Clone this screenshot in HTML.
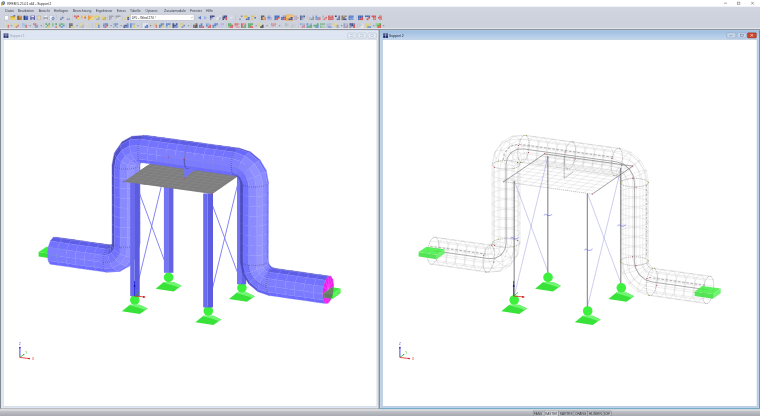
<!DOCTYPE html><html><head><meta charset="utf-8"><title>RFEM 5.21.01 x64 - Support 2</title><style>html,body{margin:0;padding:0;background:#fff}body{width:760px;height:416px;overflow:hidden;position:relative}svg{position:absolute;left:0;top:0;display:block}text{font-family:"Liberation Sans",sans-serif}</style></head><body>
<svg width="760" height="416" viewBox="0 0 760 416">
<defs><linearGradient id="gtb" x1="0" y1="0" x2="0" y2="1"><stop offset="0" stop-color="#d3d7e1"/><stop offset=".3" stop-color="#cfd3dd"/><stop offset="1" stop-color="#cdd1db"/></linearGradient><linearGradient id="gact" x1="0" y1="0" x2="0" y2="1"><stop offset="0" stop-color="#9dbde0"/><stop offset=".6" stop-color="#b4cce8"/><stop offset="1" stop-color="#c2d6ee"/></linearGradient><linearGradient id="gst" x1="0" y1="0" x2="0" y2="1"><stop offset="0" stop-color="#c4c6cc"/><stop offset="1" stop-color="#a6a8b0"/></linearGradient></defs>
<rect x="0" y="0" width="760" height="416" fill="#fff"/>
<rect x="0" y="6.7" width="760" height="21.5" fill="url(#gtb)"/>
<rect x="0" y="28.1" width="760" height="1.1" fill="#e2e5ea"/>
<rect x="0" y="29" width="760" height="1.4" fill="#8d9199"/>
<rect x="0" y="30.4" width="378.6" height="378" fill="#dde6f2"/>
<rect x="0" y="30.4" width="0.9" height="378.6" fill="#7a7d84"/>
<rect x="3.3" y="39.5" width="373.6" height="366.8" fill="#fff" stroke="#c4c8d0" stroke-width=".4"/>
<rect x="378.5" y="29.5" width="1.8" height="379.6" fill="#8c9097"/>
<rect x="380.2" y="30.4" width="379.8" height="378.2" fill="#bcd2ec"/>
<rect x="380.2" y="30.4" width="379.8" height="9.2" fill="url(#gact)"/>
<rect x="759.2" y="30.4" width="0.8" height="378" fill="#6f7f92"/>
<rect x="382.6" y="39.5" width="374.4" height="366.8" fill="#fff" stroke="#9fb4cc" stroke-width=".4"/>
<rect x="0" y="408.3" width="379" height="1.1" fill="#a2a4a8"/>
<rect x="380.2" y="408.2" width="379.8" height="1.2" fill="#5f9fb8"/>
<rect x="0" y="409.3" width="760" height="1.3" fill="#d6d7db"/>
<rect x="0" y="410.5" width="760" height="5.5" fill="url(#gst)"/>
<rect x="533.1" y="411" width="11.1" height="5" fill="#b8babf" stroke="#6c7078" stroke-width=".35"/>
<rect x="544.2" y="411" width="14.4" height="5" fill="#dcdde0" stroke="#6c7078" stroke-width=".35"/>
<rect x="558.6" y="411" width="15.4" height="5" fill="#babcc2" stroke="#6c7078" stroke-width=".35"/>
<rect x="574" y="411" width="13.8" height="5" fill="#b8babf" stroke="#6c7078" stroke-width=".35"/>
<rect x="587.8" y="411" width="15.3" height="5" fill="#b8babf" stroke="#6c7078" stroke-width=".35"/>
<rect x="603.1" y="411" width="8.3" height="5" fill="#b8babf" stroke="#6c7078" stroke-width=".35"/>
<rect x="130.5" y="14.6" width="63.5" height="5.6" fill="#fff" stroke="#aab2c2" stroke-width=".4"/>
<circle cx="3.4" cy="3.1" r="1.8" fill="#4a6ab8"/><circle cx="3.7" cy="2.9" r=".8" fill="#9cb0dc"/><rect x="1.1" y="2.3" width="1.7" height="3.3" rx=".7" fill="#c8a21e"/>
<path d="M724 3.2h3M737.4 2.2h2.4v2.2h-2.4zM751.2 1.8l2.6 2.8M753.8 1.8l-2.6 2.8" stroke="#444" stroke-width=".45" fill="none"/>
<rect x="286" y="14.8" width="7" height="5.8" fill="#f4c070" rx=".6" stroke="#d89030" stroke-width=".3"/>
<g opacity="0.76"><rect x="58.5" y="15.5" width="1.72" height="1.55" fill="#ced3dd"/><rect x="61.83" y="15.5" width="1.72" height="1.55" fill="#b4bccc"/><rect x="60.17" y="17" width="1.72" height="1.55" fill="#b4bccc"/><rect x="61.83" y="17" width="1.72" height="1.55" fill="#4c6cac"/><rect x="60.17" y="18.5" width="1.72" height="1.55" fill="#4c6cac"/></g>
<g opacity="0.66"><rect x="65" y="15.5" width="1.72" height="1.55" fill="#d6d9e3"/><rect x="65" y="17" width="1.72" height="1.55" fill="#d6d9e3"/><rect x="66.67" y="17" width="1.72" height="1.55" fill="#c0c6d4"/><rect x="65" y="18.5" width="1.72" height="1.55" fill="#d6d9e3"/><rect x="66.67" y="18.5" width="1.72" height="1.55" fill="#7888b0"/><rect x="68.33" y="18.5" width="1.72" height="1.55" fill="#7888b0"/></g>
<g opacity="0.76"><rect x="74" y="15.5" width="1.72" height="1.55" fill="#d43838"/><rect x="75.67" y="15.5" width="1.72" height="1.55" fill="#e37d7d"/><rect x="77.33" y="15.5" width="1.72" height="1.55" fill="#d43838"/><rect x="75.67" y="17" width="1.72" height="1.55" fill="#d43838"/><rect x="77.33" y="17" width="1.72" height="1.55" fill="#ecd444"/><rect x="77.33" y="18.5" width="1.72" height="1.55" fill="#ecd444"/></g>
<g opacity="0.85"><rect x="81" y="15.5" width="1.72" height="1.55" fill="#ecb444"/><rect x="84.33" y="15.5" width="1.72" height="1.55" fill="#ecb444"/><rect x="81" y="17" width="1.72" height="1.55" fill="#ecb444"/><rect x="82.67" y="17" width="1.72" height="1.55" fill="#f2ce85"/><rect x="84.33" y="17" width="1.72" height="1.55" fill="#dc5c30"/></g>
<g opacity="0.85"><rect x="88" y="15.5" width="1.72" height="1.55" fill="#e88c24"/><rect x="89.67" y="15.5" width="1.72" height="1.55" fill="#f0b470"/><rect x="91.33" y="15.5" width="1.72" height="1.55" fill="#f0b470"/><rect x="88" y="17" width="1.72" height="1.55" fill="#e88c24"/><rect x="89.67" y="17" width="1.72" height="1.55" fill="#e88c24"/><rect x="91.33" y="17" width="1.72" height="1.55" fill="#f4dc60"/><rect x="88" y="18.5" width="1.72" height="1.55" fill="#e88c24"/><rect x="89.67" y="18.5" width="1.72" height="1.55" fill="#f4dc60"/><rect x="91.33" y="18.5" width="1.72" height="1.55" fill="#f4dc60"/></g>
<g opacity="0.85"><rect x="94.5" y="15.5" width="1.72" height="1.55" fill="#e8d44c"/><rect x="96.17" y="15.5" width="1.72" height="1.55" fill="#e8d44c"/><rect x="97.83" y="15.5" width="1.72" height="1.55" fill="#e8d44c"/><rect x="94.5" y="17" width="1.72" height="1.55" fill="#e8d44c"/><rect x="96.17" y="17" width="1.72" height="1.55" fill="#f0e38a"/><rect x="97.83" y="17" width="1.72" height="1.55" fill="#a0a4ac"/><rect x="96.17" y="18.5" width="1.72" height="1.55" fill="#a0a4ac"/><rect x="97.83" y="18.5" width="1.72" height="1.55" fill="#a0a4ac"/></g>
<g opacity="0.85"><rect x="102.67" y="15.5" width="1.72" height="1.55" fill="#e8d454"/><rect x="101" y="17" width="1.72" height="1.55" fill="#e8d454"/><rect x="102.67" y="17" width="1.72" height="1.55" fill="#e8d454"/><rect x="104.33" y="17" width="1.72" height="1.55" fill="#c8a838"/><rect x="101" y="18.5" width="1.72" height="1.55" fill="#e8d454"/><rect x="102.67" y="18.5" width="1.72" height="1.55" fill="#c8a838"/><rect x="104.33" y="18.5" width="1.72" height="1.55" fill="#c8a838"/></g>
<g opacity="0.85"><rect x="109" y="15.5" width="1.55" height="1.55" fill="#9c9ea6"/><rect x="110.5" y="15.5" width="1.55" height="1.55" fill="#9c9ea6"/><rect x="112" y="15.5" width="1.55" height="1.55" fill="#9c9ea6"/><rect x="109" y="17" width="1.55" height="1.55" fill="#9c9ea6"/><rect x="110.5" y="17" width="1.55" height="1.55" fill="#9c9ea6"/><rect x="112" y="17" width="1.55" height="1.55" fill="#d4d6dc"/><rect x="109" y="18.5" width="1.55" height="1.55" fill="#9c9ea6"/><rect x="112" y="18.5" width="1.55" height="1.55" fill="#d4d6dc"/></g>
<g opacity="0.85"><rect x="115.5" y="15.5" width="1.72" height="1.55" fill="#94969e"/><rect x="117.17" y="15.5" width="1.72" height="1.55" fill="#94969e"/><rect x="118.83" y="15.5" width="1.72" height="1.55" fill="#94969e"/><rect x="115.5" y="17" width="1.72" height="1.55" fill="#b9babf"/><rect x="117.17" y="17" width="1.72" height="1.55" fill="#b9babf"/><rect x="118.83" y="17" width="1.72" height="1.55" fill="#e4e6ea"/><rect x="117.17" y="18.5" width="1.72" height="1.55" fill="#e4e6ea"/></g>
<g opacity="0.76"><rect x="127.33" y="15.5" width="1.72" height="1.55" fill="#e4cc44"/><rect x="125.67" y="17" width="1.72" height="1.55" fill="#eddd85"/><rect x="127.33" y="17" width="1.72" height="1.55" fill="#2c3c8c"/><rect x="124" y="18.5" width="1.72" height="1.55" fill="#e4cc44"/><rect x="127.33" y="18.5" width="1.72" height="1.55" fill="#2c3c8c"/></g>
<g opacity="0.76"><path d="M201 16.1l-3 1.7l3 1.7z" fill="#3060d0"/></g>
<g opacity="0.66"><path d="M204 16.1l3 1.7l-3 1.7z" fill="#80a0e0"/></g>
<g opacity="0.85"><rect x="210" y="15.5" width="1.55" height="1.55" fill="#283880"/><rect x="211.5" y="15.5" width="1.55" height="1.55" fill="#283880"/><rect x="213" y="15.5" width="1.55" height="1.55" fill="#283880"/><rect x="210" y="17" width="1.55" height="1.55" fill="#283880"/><rect x="211.5" y="17" width="1.55" height="1.55" fill="#737dac"/><rect x="213" y="17" width="1.55" height="1.55" fill="#d0d4e0"/><rect x="210" y="18.5" width="1.55" height="1.55" fill="#737dac"/><rect x="211.5" y="18.5" width="1.55" height="1.55" fill="#d0d4e0"/><rect x="213" y="18.5" width="1.55" height="1.55" fill="#d0d4e0"/></g>
<g opacity="0.76"><rect x="219.17" y="15.5" width="1.38" height="1.55" fill="#f0f0f5"/><rect x="216.5" y="17" width="1.38" height="1.55" fill="#f0f0f5"/><rect x="217.83" y="17" width="1.38" height="1.55" fill="#e8e8f0"/><rect x="219.17" y="17" width="1.38" height="1.55" fill="#a0a8b8"/><rect x="216.5" y="18.5" width="1.38" height="1.55" fill="#f0f0f5"/><rect x="219.17" y="18.5" width="1.38" height="1.55" fill="#a0a8b8"/></g>
<g opacity="0.85"><rect x="222.5" y="15.5" width="1.55" height="1.55" fill="#737dac"/><rect x="224" y="15.5" width="1.55" height="1.55" fill="#283880"/><rect x="225.5" y="15.5" width="1.55" height="1.55" fill="#283880"/><rect x="222.5" y="17" width="1.55" height="1.55" fill="#283880"/><rect x="224" y="17" width="1.55" height="1.55" fill="#283880"/><rect x="225.5" y="17" width="1.55" height="1.55" fill="#d04040"/><rect x="222.5" y="18.5" width="1.55" height="1.55" fill="#283880"/><rect x="225.5" y="18.5" width="1.55" height="1.55" fill="#d04040"/></g>
<g opacity="0.76"><rect x="229.5" y="15.5" width="1.55" height="1.55" fill="#d8dce8"/><rect x="231" y="15.5" width="1.55" height="1.55" fill="#d8dce8"/><rect x="232.5" y="15.5" width="1.55" height="1.55" fill="#d8dce8"/><rect x="229.5" y="17" width="1.55" height="1.55" fill="#e5e8f0"/><rect x="231" y="17" width="1.55" height="1.55" fill="#e5e8f0"/><rect x="229.5" y="18.5" width="1.55" height="1.55" fill="#d8dce8"/></g>
<g opacity="0.85"><rect x="240.83" y="15.5" width="1.72" height="1.55" fill="#7882b6"/><rect x="239.17" y="18.5" width="1.72" height="1.55" fill="#8090c0"/></g>
<g opacity="0.85"><rect x="244" y="15.5" width="1.88" height="1.55" fill="#e0c040"/><rect x="245.83" y="15.5" width="1.88" height="1.55" fill="#e0c040"/><rect x="244" y="17" width="1.88" height="1.55" fill="#ead682"/><rect x="245.83" y="17" width="1.88" height="1.55" fill="#ead682"/><rect x="247.67" y="17" width="1.88" height="1.55" fill="#4060b0"/><rect x="245.83" y="18.5" width="1.88" height="1.55" fill="#4060b0"/><rect x="247.67" y="18.5" width="1.88" height="1.55" fill="#4060b0"/></g>
<g opacity="0.85"><rect x="251" y="15.5" width="1.72" height="1.55" fill="#e0c040"/><rect x="252.67" y="15.5" width="1.72" height="1.55" fill="#e0c040"/><rect x="252.67" y="17" width="1.72" height="1.55" fill="#ead682"/><rect x="254.33" y="17" width="1.72" height="1.55" fill="#4060b0"/><rect x="251" y="18.5" width="1.72" height="1.55" fill="#e0c040"/></g>
<g opacity="0.85"><rect x="261" y="15.5" width="1.72" height="1.55" fill="#504840"/><rect x="262.67" y="15.5" width="1.72" height="1.55" fill="#504840"/><rect x="261" y="17" width="1.72" height="1.55" fill="#504840"/><rect x="264.33" y="17" width="1.72" height="1.55" fill="#e08030"/><rect x="261" y="18.5" width="1.72" height="1.55" fill="#504840"/><rect x="262.67" y="18.5" width="1.72" height="1.55" fill="#e08030"/><rect x="264.33" y="18.5" width="1.72" height="1.55" fill="#e08030"/></g>
<g opacity="0.76"><rect x="267.5" y="15.5" width="1.55" height="1.55" fill="#8da2e0"/><rect x="269" y="15.5" width="1.55" height="1.55" fill="#8da2e0"/><rect x="267.5" y="17" width="1.55" height="1.55" fill="#5070d0"/><rect x="269" y="17" width="1.55" height="1.55" fill="#5070d0"/><rect x="270.5" y="17" width="1.55" height="1.55" fill="#a0b0e0"/><rect x="267.5" y="18.5" width="1.55" height="1.55" fill="#8da2e0"/><rect x="269" y="18.5" width="1.55" height="1.55" fill="#a0b0e0"/><rect x="270.5" y="18.5" width="1.55" height="1.55" fill="#a0b0e0"/></g>
<g opacity="0.85"><rect x="274.5" y="15.5" width="1.72" height="1.55" fill="#3060c0"/><rect x="276.17" y="15.5" width="1.72" height="1.55" fill="#3060c0"/><rect x="277.83" y="15.5" width="1.72" height="1.55" fill="#3060c0"/><rect x="274.5" y="17" width="1.72" height="1.55" fill="#3060c0"/><rect x="276.17" y="17" width="1.72" height="1.55" fill="#3060c0"/><rect x="277.83" y="17" width="1.72" height="1.55" fill="#d04040"/><rect x="274.5" y="18.5" width="1.72" height="1.55" fill="#3060c0"/><rect x="276.17" y="18.5" width="1.72" height="1.55" fill="#d04040"/></g>
<g opacity="0.85"><rect x="282.67" y="15.5" width="1.72" height="1.55" fill="#7897d6"/><rect x="284.33" y="15.5" width="1.72" height="1.55" fill="#7897d6"/><rect x="281" y="17" width="1.72" height="1.55" fill="#3060c0"/><rect x="282.67" y="17" width="1.72" height="1.55" fill="#3060c0"/><rect x="284.33" y="17" width="1.72" height="1.55" fill="#d04040"/><rect x="281" y="18.5" width="1.72" height="1.55" fill="#3060c0"/><rect x="282.67" y="18.5" width="1.72" height="1.55" fill="#d04040"/><rect x="284.33" y="18.5" width="1.72" height="1.55" fill="#d04040"/></g>
<g opacity="0.95"><rect x="286.5" y="15.5" width="2.05" height="1.55" fill="#f5c178"/><rect x="288.5" y="15.5" width="2.05" height="1.55" fill="#f5c178"/><rect x="290.5" y="15.5" width="2.05" height="1.55" fill="#f5c178"/><rect x="290.5" y="17" width="2.05" height="1.55" fill="#3050c0"/><rect x="286.5" y="18.5" width="2.05" height="1.55" fill="#f0a030"/><rect x="288.5" y="18.5" width="2.05" height="1.55" fill="#3050c0"/><rect x="290.5" y="18.5" width="2.05" height="1.55" fill="#3050c0"/></g>
<g opacity="0.76"><rect x="294" y="15.5" width="1.55" height="1.55" fill="#b0a8b8"/><rect x="295.5" y="15.5" width="1.55" height="1.55" fill="#b0a8b8"/><rect x="294" y="17" width="1.55" height="1.55" fill="#b0a8b8"/><rect x="295.5" y="17" width="1.55" height="1.55" fill="#b0a8b8"/><rect x="297" y="17" width="1.55" height="1.55" fill="#d090a0"/><rect x="294" y="18.5" width="1.55" height="1.55" fill="#b0a8b8"/><rect x="295.5" y="18.5" width="1.55" height="1.55" fill="#d090a0"/></g>
<g opacity="0.76"><rect x="300" y="15.5" width="1.72" height="1.55" fill="#304080"/><rect x="301.67" y="15.5" width="1.72" height="1.55" fill="#7882ac"/><rect x="303.33" y="15.5" width="1.72" height="1.55" fill="#304080"/><rect x="300" y="17" width="1.72" height="1.55" fill="#304080"/><rect x="301.67" y="17" width="1.72" height="1.55" fill="#7882ac"/><rect x="303.33" y="17" width="1.72" height="1.55" fill="#a0a8c0"/><rect x="300" y="18.5" width="1.72" height="1.55" fill="#304080"/><rect x="301.67" y="18.5" width="1.72" height="1.55" fill="#a0a8c0"/></g>
<g opacity="0.57"><rect x="312.33" y="15.5" width="1.72" height="1.55" fill="#a0a4b0"/><rect x="309" y="17" width="1.72" height="1.55" fill="#a0a4b0"/><rect x="312.33" y="17" width="1.72" height="1.55" fill="#606878"/><rect x="309" y="18.5" width="1.72" height="1.55" fill="#a0a4b0"/><rect x="310.67" y="18.5" width="1.72" height="1.55" fill="#606878"/><rect x="312.33" y="18.5" width="1.72" height="1.55" fill="#606878"/></g>
<g opacity="0.66"><rect x="315.5" y="15.5" width="1.72" height="1.55" fill="#4080d0"/><rect x="315.5" y="17" width="1.72" height="1.55" fill="#4080d0"/><rect x="317.17" y="17" width="1.72" height="1.55" fill="#4080d0"/><rect x="318.83" y="17" width="1.72" height="1.55" fill="#d05050"/><rect x="315.5" y="18.5" width="1.72" height="1.55" fill="#4080d0"/><rect x="317.17" y="18.5" width="1.72" height="1.55" fill="#d05050"/><rect x="318.83" y="18.5" width="1.72" height="1.55" fill="#d05050"/></g>
<g opacity="0.66"><rect x="322" y="15.5" width="1.72" height="1.55" fill="#a0a0a8"/><rect x="325.33" y="15.5" width="1.72" height="1.55" fill="#c1c1c6"/><rect x="322" y="17" width="1.72" height="1.55" fill="#c1c1c6"/><rect x="323.67" y="17" width="1.72" height="1.55" fill="#c1c1c6"/><rect x="325.33" y="17" width="1.72" height="1.55" fill="#d04040"/><rect x="322" y="18.5" width="1.72" height="1.55" fill="#c1c1c6"/><rect x="323.67" y="18.5" width="1.72" height="1.55" fill="#d04040"/></g>
<g opacity="0.66"><rect x="328" y="15.5" width="1.88" height="1.55" fill="#d83030"/><rect x="329.83" y="15.5" width="1.88" height="1.55" fill="#e57878"/><rect x="331.67" y="15.5" width="1.88" height="1.55" fill="#d83030"/><rect x="328" y="17" width="1.88" height="1.55" fill="#d83030"/><rect x="329.83" y="17" width="1.88" height="1.55" fill="#d83030"/><rect x="331.67" y="17" width="1.88" height="1.55" fill="#d83030"/><rect x="328" y="18.5" width="1.88" height="1.55" fill="#d83030"/><rect x="329.83" y="18.5" width="1.88" height="1.55" fill="#d83030"/><rect x="331.67" y="18.5" width="1.88" height="1.55" fill="#d83030"/></g>
<g opacity="0.85"><rect x="335" y="15.5" width="1.72" height="1.55" fill="#202870"/><rect x="338.33" y="15.5" width="1.72" height="1.55" fill="#6e73a2"/><rect x="338.33" y="17" width="1.72" height="1.55" fill="#5060a0"/><rect x="336.67" y="18.5" width="1.72" height="1.55" fill="#5060a0"/><rect x="338.33" y="18.5" width="1.72" height="1.55" fill="#5060a0"/></g>
<g opacity="0.85"><rect x="341.5" y="15.5" width="1.72" height="1.55" fill="#806850"/><rect x="343.17" y="15.5" width="1.72" height="1.55" fill="#ac9c8d"/><rect x="344.83" y="15.5" width="1.72" height="1.55" fill="#806850"/><rect x="341.5" y="17" width="1.72" height="1.55" fill="#806850"/><rect x="343.17" y="17" width="1.72" height="1.55" fill="#806850"/><rect x="341.5" y="18.5" width="1.72" height="1.55" fill="#806850"/><rect x="343.17" y="18.5" width="1.72" height="1.55" fill="#283880"/><rect x="344.83" y="18.5" width="1.72" height="1.55" fill="#283880"/></g>
<g opacity="0.76"><rect x="348.5" y="15.5" width="1.72" height="1.55" fill="#3868c8"/><rect x="350.17" y="15.5" width="1.72" height="1.55" fill="#3868c8"/><rect x="351.83" y="15.5" width="1.72" height="1.55" fill="#3868c8"/><rect x="348.5" y="17" width="1.72" height="1.55" fill="#3868c8"/><rect x="350.17" y="17" width="1.72" height="1.55" fill="#3868c8"/><rect x="351.83" y="17" width="1.72" height="1.55" fill="#5888d8"/><rect x="348.5" y="18.5" width="1.72" height="1.55" fill="#3868c8"/><rect x="350.17" y="18.5" width="1.72" height="1.55" fill="#5888d8"/><rect x="351.83" y="18.5" width="1.72" height="1.55" fill="#5888d8"/></g>
<g opacity="0.85"><rect x="358" y="15.5" width="1.72" height="1.55" fill="#2858b8"/><rect x="359.67" y="15.5" width="1.72" height="1.55" fill="#2858b8"/><rect x="361.33" y="15.5" width="1.72" height="1.55" fill="#2858b8"/><rect x="358" y="17" width="1.72" height="1.55" fill="#2858b8"/><rect x="359.67" y="17" width="1.72" height="1.55" fill="#2858b8"/><rect x="361.33" y="17" width="1.72" height="1.55" fill="#d03030"/><rect x="358" y="18.5" width="1.72" height="1.55" fill="#2858b8"/><rect x="359.67" y="18.5" width="1.72" height="1.55" fill="#d03030"/><rect x="361.33" y="18.5" width="1.72" height="1.55" fill="#d03030"/></g>
<g opacity="0.85"><rect x="365" y="15.5" width="1.72" height="1.55" fill="#2858b8"/><rect x="366.67" y="15.5" width="1.72" height="1.55" fill="#2858b8"/><rect x="368.33" y="15.5" width="1.72" height="1.55" fill="#2858b8"/><rect x="368.33" y="17" width="1.72" height="1.55" fill="#d03030"/><rect x="366.67" y="18.5" width="1.72" height="1.55" fill="#d03030"/></g>
<g opacity="0.76"><rect x="371.5" y="15.5" width="1.55" height="1.55" fill="#d83030"/><rect x="373" y="15.5" width="1.55" height="1.55" fill="#d83030"/><rect x="374.5" y="15.5" width="1.55" height="1.55" fill="#d83030"/><rect x="373" y="17" width="1.55" height="1.55" fill="#d83030"/><rect x="374.5" y="17" width="1.55" height="1.55" fill="#e06060"/><rect x="373" y="18.5" width="1.55" height="1.55" fill="#e06060"/><rect x="374.5" y="18.5" width="1.55" height="1.55" fill="#e06060"/></g>
<g opacity="0.76"><rect x="379.33" y="15.5" width="1.38" height="1.55" fill="#d83030"/><rect x="380.67" y="15.5" width="1.38" height="1.55" fill="#e57878"/><rect x="378" y="17" width="1.38" height="1.55" fill="#d83030"/><rect x="379.33" y="17" width="1.38" height="1.55" fill="#d83030"/><rect x="380.67" y="17" width="1.38" height="1.55" fill="#e06060"/><rect x="379.33" y="18.5" width="1.38" height="1.55" fill="#e06060"/><rect x="380.67" y="18.5" width="1.38" height="1.55" fill="#e06060"/></g>
<g opacity="0.57"><rect x="5" y="23.3" width="1.38" height="1.55" fill="#f5e588"/><rect x="7.67" y="23.3" width="1.38" height="1.55" fill="#f5e588"/><rect x="5" y="24.8" width="1.38" height="1.55" fill="#f0d848"/><rect x="7.67" y="24.8" width="1.38" height="1.55" fill="#d03030"/><rect x="5" y="26.3" width="1.38" height="1.55" fill="#f5e588"/><rect x="7.67" y="26.3" width="1.38" height="1.55" fill="#d03030"/></g>
<g opacity="0.52"><rect x="14" y="23.3" width="1.72" height="1.55" fill="#f0d848"/><rect x="15.67" y="23.3" width="1.72" height="1.55" fill="#f0d848"/><rect x="14" y="24.8" width="1.72" height="1.55" fill="#f0d848"/><rect x="15.67" y="24.8" width="1.72" height="1.55" fill="#f0d848"/><rect x="17.33" y="24.8" width="1.72" height="1.55" fill="#d03030"/><rect x="15.67" y="26.3" width="1.72" height="1.55" fill="#d03030"/></g>
<g opacity="0.52"><rect x="22" y="23.3" width="1.72" height="1.55" fill="#58a4e0"/><rect x="23.67" y="23.3" width="1.72" height="1.55" fill="#92c3ea"/><rect x="22" y="24.8" width="1.72" height="1.55" fill="#92c3ea"/><rect x="23.67" y="24.8" width="1.72" height="1.55" fill="#58a4e0"/><rect x="25.33" y="24.8" width="1.72" height="1.55" fill="#d03030"/><rect x="22" y="26.3" width="1.72" height="1.55" fill="#92c3ea"/><rect x="25.33" y="26.3" width="1.72" height="1.55" fill="#d03030"/></g>
<g opacity="0.57"><rect x="33" y="23.3" width="1.72" height="1.55" fill="#d03838"/><rect x="34.67" y="23.3" width="1.72" height="1.55" fill="#d03838"/><rect x="34.67" y="24.8" width="1.72" height="1.55" fill="#d03838"/><rect x="36.33" y="24.8" width="1.72" height="1.55" fill="#5878d0"/><rect x="34.67" y="26.3" width="1.72" height="1.55" fill="#5878d0"/><rect x="36.33" y="26.3" width="1.72" height="1.55" fill="#5878d0"/></g>
<g opacity="0.76"><rect x="45.5" y="23.3" width="1.55" height="1.55" fill="#2c9c3c"/><rect x="48.5" y="23.3" width="1.55" height="1.55" fill="#2c9c3c"/><rect x="47" y="24.8" width="1.55" height="1.55" fill="#2c9c3c"/><rect x="48.5" y="24.8" width="1.55" height="1.55" fill="#e4c840"/><rect x="45.5" y="26.3" width="1.55" height="1.55" fill="#75be80"/><rect x="47" y="26.3" width="1.55" height="1.55" fill="#e4c840"/><rect x="48.5" y="26.3" width="1.55" height="1.55" fill="#e4c840"/></g>
<g opacity="0.76"><rect x="52" y="23.3" width="1.72" height="1.55" fill="#75be80"/><rect x="55.33" y="23.3" width="1.72" height="1.55" fill="#2c9c3c"/><rect x="52" y="24.8" width="1.72" height="1.55" fill="#75be80"/><rect x="55.33" y="26.3" width="1.72" height="1.55" fill="#d06030"/></g>
<g opacity="0.76"><rect x="59" y="23.3" width="1.88" height="1.55" fill="#80c192"/><rect x="60.83" y="23.3" width="1.88" height="1.55" fill="#3ca058"/><rect x="62.67" y="23.3" width="1.88" height="1.55" fill="#80c192"/><rect x="59" y="24.8" width="1.88" height="1.55" fill="#3ca058"/><rect x="62.67" y="24.8" width="1.88" height="1.55" fill="#3c80d0"/><rect x="60.83" y="26.3" width="1.88" height="1.55" fill="#3c80d0"/></g>
<g opacity="0.57"><rect x="69" y="23.3" width="1.88" height="1.55" fill="#282828"/><rect x="70.83" y="23.3" width="1.88" height="1.55" fill="#282828"/><rect x="69" y="24.8" width="1.88" height="1.55" fill="#282828"/><rect x="70.83" y="24.8" width="1.88" height="1.55" fill="#282828"/><rect x="69" y="26.3" width="1.88" height="1.55" fill="#282828"/><rect x="70.83" y="26.3" width="1.88" height="1.55" fill="#e4c840"/><rect x="72.67" y="26.3" width="1.88" height="1.55" fill="#e4c840"/></g>
<g opacity="0.57"><rect x="79" y="23.3" width="1.72" height="1.55" fill="#e4d464"/><rect x="80.67" y="23.3" width="1.72" height="1.55" fill="#ede39a"/><rect x="82.33" y="23.3" width="1.72" height="1.55" fill="#e4d464"/><rect x="79" y="24.8" width="1.72" height="1.55" fill="#e4d464"/><rect x="80.67" y="24.8" width="1.72" height="1.55" fill="#e4d464"/><rect x="82.33" y="24.8" width="1.72" height="1.55" fill="#9ca4b4"/><rect x="79" y="26.3" width="1.72" height="1.55" fill="#e4d464"/><rect x="80.67" y="26.3" width="1.72" height="1.55" fill="#9ca4b4"/><rect x="82.33" y="26.3" width="1.72" height="1.55" fill="#9ca4b4"/></g>
<g opacity="0.57"><rect x="85" y="23.3" width="1.55" height="1.55" fill="#dbdde0"/><rect x="86.5" y="23.3" width="1.55" height="1.55" fill="#dbdde0"/><rect x="88" y="24.8" width="1.55" height="1.55" fill="#e4d464"/><rect x="85" y="26.3" width="1.55" height="1.55" fill="#dbdde0"/></g>
<g opacity="0.66"><rect x="95" y="23.3" width="1.55" height="1.55" fill="#e4c840"/><rect x="96.5" y="23.3" width="1.55" height="1.55" fill="#e4c840"/><rect x="98" y="23.3" width="1.55" height="1.55" fill="#e4c840"/><rect x="95" y="24.8" width="1.55" height="1.55" fill="#eddb82"/><rect x="96.5" y="24.8" width="1.55" height="1.55" fill="#eddb82"/><rect x="98" y="24.8" width="1.55" height="1.55" fill="#3c6cc4"/><rect x="95" y="26.3" width="1.55" height="1.55" fill="#e4c840"/><rect x="98" y="26.3" width="1.55" height="1.55" fill="#3c6cc4"/></g>
<g opacity="0.76"><rect x="103" y="23.3" width="1.72" height="1.55" fill="#809fd8"/><rect x="104.67" y="23.3" width="1.72" height="1.55" fill="#3c6cc4"/><rect x="106.33" y="23.3" width="1.72" height="1.55" fill="#3c6cc4"/><rect x="103" y="24.8" width="1.72" height="1.55" fill="#3c6cc4"/><rect x="104.67" y="24.8" width="1.72" height="1.55" fill="#809fd8"/><rect x="106.33" y="24.8" width="1.72" height="1.55" fill="#d03838"/><rect x="103" y="26.3" width="1.72" height="1.55" fill="#809fd8"/><rect x="104.67" y="26.3" width="1.72" height="1.55" fill="#d03838"/></g>
<g opacity="0.66"><rect x="113" y="23.3" width="1.72" height="1.55" fill="#85a4d8"/><rect x="114.67" y="23.3" width="1.72" height="1.55" fill="#4474c4"/><rect x="116.33" y="23.3" width="1.72" height="1.55" fill="#4474c4"/><rect x="114.67" y="24.8" width="1.72" height="1.55" fill="#4474c4"/><rect x="113" y="26.3" width="1.72" height="1.55" fill="#85a4d8"/><rect x="116.33" y="26.3" width="1.72" height="1.55" fill="#80a0d8"/></g>
<g opacity="0.85"><rect x="126.83" y="23.3" width="1.72" height="1.55" fill="#707ba7"/><rect x="123.5" y="24.8" width="1.72" height="1.55" fill="#707ba7"/><rect x="125.17" y="24.8" width="1.72" height="1.55" fill="#243478"/><rect x="126.83" y="24.8" width="1.72" height="1.55" fill="#5c7cc4"/><rect x="123.5" y="26.3" width="1.72" height="1.55" fill="#243478"/><rect x="125.17" y="26.3" width="1.72" height="1.55" fill="#5c7cc4"/><rect x="126.83" y="26.3" width="1.72" height="1.55" fill="#5c7cc4"/></g>
<g opacity="0.76"><rect x="130" y="23.3" width="1.72" height="1.55" fill="#4474c4"/><rect x="131.67" y="23.3" width="1.72" height="1.55" fill="#85a4d8"/><rect x="133.33" y="23.3" width="1.72" height="1.55" fill="#85a4d8"/><rect x="130" y="24.8" width="1.72" height="1.55" fill="#4474c4"/><rect x="133.33" y="24.8" width="1.72" height="1.55" fill="#e4c840"/><rect x="130" y="26.3" width="1.72" height="1.55" fill="#4474c4"/><rect x="133.33" y="26.3" width="1.72" height="1.55" fill="#e4c840"/></g>
<g opacity="0.76"><rect x="143" y="23.3" width="1.72" height="1.55" fill="#f4f4fa"/><rect x="144.67" y="23.3" width="1.72" height="1.55" fill="#f4f4fa"/><rect x="146.33" y="23.3" width="1.72" height="1.55" fill="#f4f4fa"/><rect x="143" y="24.8" width="1.72" height="1.55" fill="#f4f4fa"/><rect x="146.33" y="24.8" width="1.72" height="1.55" fill="#2c5cc0"/><rect x="143" y="26.3" width="1.72" height="1.55" fill="#f4f4fa"/><rect x="144.67" y="26.3" width="1.72" height="1.55" fill="#2c5cc0"/><rect x="146.33" y="26.3" width="1.72" height="1.55" fill="#2c5cc0"/></g>
<g opacity="0.57"><rect x="153" y="23.3" width="1.38" height="1.55" fill="#e4c840"/><rect x="154.33" y="23.3" width="1.38" height="1.55" fill="#e4c840"/><rect x="155.67" y="23.3" width="1.38" height="1.55" fill="#e4c840"/><rect x="153" y="24.8" width="1.38" height="1.55" fill="#e4c840"/><rect x="154.33" y="24.8" width="1.38" height="1.55" fill="#e4c840"/><rect x="155.67" y="24.8" width="1.38" height="1.55" fill="#d03838"/><rect x="155.67" y="26.3" width="1.38" height="1.55" fill="#d03838"/></g>
<g opacity="0.76"><rect x="160.67" y="23.3" width="1.72" height="1.55" fill="#3c6cc4"/><rect x="162.33" y="23.3" width="1.72" height="1.55" fill="#3c6cc4"/><rect x="159" y="24.8" width="1.72" height="1.55" fill="#3c6cc4"/><rect x="160.67" y="24.8" width="1.72" height="1.55" fill="#3c6cc4"/><rect x="162.33" y="24.8" width="1.72" height="1.55" fill="#e4c840"/><rect x="159" y="26.3" width="1.72" height="1.55" fill="#3c6cc4"/><rect x="162.33" y="26.3" width="1.72" height="1.55" fill="#e4c840"/></g>
<g opacity="0.76"><rect x="166" y="23.3" width="1.55" height="1.55" fill="#3c6cc4"/><rect x="167.5" y="23.3" width="1.55" height="1.55" fill="#3c6cc4"/><rect x="169" y="23.3" width="1.55" height="1.55" fill="#3c6cc4"/><rect x="166" y="24.8" width="1.55" height="1.55" fill="#3c6cc4"/><rect x="169" y="24.8" width="1.55" height="1.55" fill="#e4c840"/><rect x="166" y="26.3" width="1.55" height="1.55" fill="#809fd8"/><rect x="169" y="26.3" width="1.55" height="1.55" fill="#e4c840"/></g>
<g opacity="0.85"><rect x="172.5" y="23.3" width="1.72" height="1.55" fill="#243478"/><rect x="175.83" y="23.3" width="1.72" height="1.55" fill="#243478"/><rect x="172.5" y="24.8" width="1.72" height="1.55" fill="#243478"/><rect x="174.17" y="24.8" width="1.72" height="1.55" fill="#243478"/><rect x="175.83" y="24.8" width="1.72" height="1.55" fill="#5c7cc4"/><rect x="172.5" y="26.3" width="1.72" height="1.55" fill="#243478"/><rect x="174.17" y="26.3" width="1.72" height="1.55" fill="#5c7cc4"/><rect x="175.83" y="26.3" width="1.72" height="1.55" fill="#5c7cc4"/></g>
<g opacity="0.66"><rect x="180" y="23.3" width="1.72" height="1.55" fill="#e4c840"/><rect x="181.67" y="23.3" width="1.72" height="1.55" fill="#e4c840"/><rect x="181.67" y="24.8" width="1.72" height="1.55" fill="#eddb82"/><rect x="183.33" y="24.8" width="1.72" height="1.55" fill="#3c6cc4"/><rect x="180" y="26.3" width="1.72" height="1.55" fill="#eddb82"/><rect x="181.67" y="26.3" width="1.72" height="1.55" fill="#3c6cc4"/></g>
<g opacity="0.76"><rect x="194.5" y="23.3" width="1.55" height="1.55" fill="#9f8d82"/><rect x="196" y="23.3" width="1.55" height="1.55" fill="#6c5040"/><rect x="193" y="24.8" width="1.55" height="1.55" fill="#6c5040"/><rect x="194.5" y="24.8" width="1.55" height="1.55" fill="#6c5040"/><rect x="196" y="24.8" width="1.55" height="1.55" fill="#282828"/><rect x="193" y="26.3" width="1.55" height="1.55" fill="#6c5040"/><rect x="194.5" y="26.3" width="1.55" height="1.55" fill="#282828"/><rect x="196" y="26.3" width="1.55" height="1.55" fill="#282828"/></g>
<g opacity="0.76"><rect x="200.67" y="23.3" width="1.72" height="1.55" fill="#3c6cc4"/><rect x="199" y="24.8" width="1.72" height="1.55" fill="#3c6cc4"/><rect x="200.67" y="24.8" width="1.72" height="1.55" fill="#3c6cc4"/><rect x="199" y="26.3" width="1.72" height="1.55" fill="#3c6cc4"/><rect x="200.67" y="26.3" width="1.72" height="1.55" fill="#d03838"/><rect x="202.33" y="26.3" width="1.72" height="1.55" fill="#d03838"/></g>
<g opacity="0.76"><rect x="206" y="23.3" width="1.72" height="1.55" fill="#809fd8"/><rect x="207.67" y="23.3" width="1.72" height="1.55" fill="#809fd8"/><rect x="206" y="24.8" width="1.72" height="1.55" fill="#3c6cc4"/><rect x="209.33" y="24.8" width="1.72" height="1.55" fill="#d03838"/><rect x="207.67" y="26.3" width="1.72" height="1.55" fill="#d03838"/><rect x="209.33" y="26.3" width="1.72" height="1.55" fill="#d03838"/></g>
<g opacity="0.76"><rect x="214.33" y="23.3" width="1.88" height="1.55" fill="#3c6cc4"/><rect x="216.17" y="23.3" width="1.88" height="1.55" fill="#3c6cc4"/><rect x="212.5" y="24.8" width="1.88" height="1.55" fill="#3c6cc4"/><rect x="214.33" y="24.8" width="1.88" height="1.55" fill="#3c6cc4"/><rect x="216.17" y="24.8" width="1.88" height="1.55" fill="#a0b8e0"/><rect x="212.5" y="26.3" width="1.88" height="1.55" fill="#3c6cc4"/><rect x="214.33" y="26.3" width="1.88" height="1.55" fill="#a0b8e0"/></g>
<g opacity="0.76"><rect x="220.67" y="23.3" width="1.72" height="1.55" fill="#a4a4dc"/><rect x="222.33" y="23.3" width="1.72" height="1.55" fill="#a4a4dc"/><rect x="219" y="24.8" width="1.72" height="1.55" fill="#c3c3e8"/><rect x="222.33" y="24.8" width="1.72" height="1.55" fill="#c4c4ec"/><rect x="219" y="26.3" width="1.72" height="1.55" fill="#c3c3e8"/><rect x="220.67" y="26.3" width="1.72" height="1.55" fill="#c4c4ec"/></g>
<g opacity="0.76"><rect x="228" y="23.3" width="1.72" height="1.55" fill="#3ca04c"/><rect x="229.67" y="23.3" width="1.72" height="1.55" fill="#3ca04c"/><rect x="228" y="24.8" width="1.72" height="1.55" fill="#3ca04c"/><rect x="229.67" y="24.8" width="1.72" height="1.55" fill="#3ca04c"/><rect x="231.33" y="24.8" width="1.72" height="1.55" fill="#d03838"/><rect x="228" y="26.3" width="1.72" height="1.55" fill="#80c18a"/><rect x="229.67" y="26.3" width="1.72" height="1.55" fill="#d03838"/><rect x="231.33" y="26.3" width="1.72" height="1.55" fill="#d03838"/></g>
<g opacity="0.66"><rect x="234.5" y="23.3" width="1.72" height="1.55" fill="#d03838"/><rect x="236.17" y="23.3" width="1.72" height="1.55" fill="#d03838"/><rect x="237.83" y="23.3" width="1.72" height="1.55" fill="#e07d7d"/><rect x="234.5" y="24.8" width="1.72" height="1.55" fill="#e07d7d"/><rect x="236.17" y="24.8" width="1.72" height="1.55" fill="#e07d7d"/><rect x="236.17" y="26.3" width="1.72" height="1.55" fill="#e48080"/><rect x="237.83" y="26.3" width="1.72" height="1.55" fill="#e48080"/></g>
<g opacity="0.76"><rect x="241" y="23.3" width="1.72" height="1.55" fill="#d03838"/><rect x="242.67" y="23.3" width="1.72" height="1.55" fill="#e07d7d"/><rect x="244.33" y="23.3" width="1.72" height="1.55" fill="#e07d7d"/><rect x="241" y="24.8" width="1.72" height="1.55" fill="#d03838"/><rect x="244.33" y="24.8" width="1.72" height="1.55" fill="#3ca04c"/><rect x="241" y="26.3" width="1.72" height="1.55" fill="#d03838"/><rect x="242.67" y="26.3" width="1.72" height="1.55" fill="#3ca04c"/><rect x="244.33" y="26.3" width="1.72" height="1.55" fill="#3ca04c"/></g>
<g opacity="0.76"><rect x="248" y="23.3" width="1.72" height="1.55" fill="#3ca04c"/><rect x="249.67" y="23.3" width="1.72" height="1.55" fill="#3ca04c"/><rect x="251.33" y="23.3" width="1.72" height="1.55" fill="#3ca04c"/><rect x="248" y="24.8" width="1.72" height="1.55" fill="#3ca04c"/><rect x="249.67" y="24.8" width="1.72" height="1.55" fill="#3ca04c"/><rect x="248" y="26.3" width="1.72" height="1.55" fill="#3ca04c"/><rect x="249.67" y="26.3" width="1.72" height="1.55" fill="#d03838"/><rect x="251.33" y="26.3" width="1.72" height="1.55" fill="#d03838"/></g>
<g opacity="0.76"><rect x="258.5" y="23.3" width="1.72" height="1.55" fill="#e4d440"/><rect x="260.17" y="23.3" width="1.72" height="1.55" fill="#ede382"/><rect x="258.5" y="24.8" width="1.72" height="1.55" fill="#e4d440"/><rect x="261.83" y="24.8" width="1.72" height="1.55" fill="#202020"/><rect x="258.5" y="26.3" width="1.72" height="1.55" fill="#ede382"/><rect x="260.17" y="26.3" width="1.72" height="1.55" fill="#202020"/><rect x="261.83" y="26.3" width="1.72" height="1.55" fill="#202020"/></g>
<g opacity="0.47"><rect x="271" y="23.3" width="1.72" height="1.55" fill="#d03838"/><rect x="272.67" y="23.3" width="1.72" height="1.55" fill="#e07d7d"/><rect x="274.33" y="23.3" width="1.72" height="1.55" fill="#d03838"/><rect x="271" y="24.8" width="1.72" height="1.55" fill="#e07d7d"/><rect x="272.67" y="24.8" width="1.72" height="1.55" fill="#d03838"/><rect x="274.33" y="24.8" width="1.72" height="1.55" fill="#a0a8b0"/></g>
<g opacity="0.57"><rect x="285" y="23.3" width="1.38" height="1.55" fill="#a0a8b0"/><rect x="286.33" y="23.3" width="1.38" height="1.55" fill="#a0a8b0"/><rect x="287.67" y="23.3" width="1.38" height="1.55" fill="#c1c6cb"/><rect x="285" y="24.8" width="1.38" height="1.55" fill="#a0a8b0"/><rect x="286.33" y="24.8" width="1.38" height="1.55" fill="#a0a8b0"/><rect x="287.67" y="24.8" width="1.38" height="1.55" fill="#c0c4cc"/></g>
<g opacity="0.57"><rect x="291" y="23.3" width="1.72" height="1.55" fill="#c6c9ce"/><rect x="294.33" y="23.3" width="1.72" height="1.55" fill="#c6c9ce"/><rect x="291" y="24.8" width="1.72" height="1.55" fill="#c6c9ce"/><rect x="292.67" y="24.8" width="1.72" height="1.55" fill="#a8acb4"/><rect x="294.33" y="24.8" width="1.72" height="1.55" fill="#c8ccd4"/><rect x="291" y="26.3" width="1.72" height="1.55" fill="#a8acb4"/><rect x="292.67" y="26.3" width="1.72" height="1.55" fill="#c8ccd4"/><rect x="294.33" y="26.3" width="1.72" height="1.55" fill="#c8ccd4"/></g>
<g opacity="0.47"><rect x="300" y="23.3" width="1.72" height="1.55" fill="#3c6cc4"/><rect x="301.67" y="23.3" width="1.72" height="1.55" fill="#809fd8"/><rect x="303.33" y="23.3" width="1.72" height="1.55" fill="#809fd8"/><rect x="301.67" y="24.8" width="1.72" height="1.55" fill="#809fd8"/><rect x="303.33" y="24.8" width="1.72" height="1.55" fill="#d03838"/><rect x="301.67" y="26.3" width="1.72" height="1.55" fill="#d03838"/><rect x="303.33" y="26.3" width="1.72" height="1.55" fill="#d03838"/></g>
<g opacity="0.76"><rect x="306.5" y="23.3" width="1.88" height="1.55" fill="#3c80d0"/><rect x="310.17" y="23.3" width="1.88" height="1.55" fill="#80ace0"/><rect x="306.5" y="24.8" width="1.88" height="1.55" fill="#80ace0"/><rect x="308.33" y="24.8" width="1.88" height="1.55" fill="#80ace0"/><rect x="310.17" y="24.8" width="1.88" height="1.55" fill="#3ca04c"/><rect x="306.5" y="26.3" width="1.88" height="1.55" fill="#3c80d0"/><rect x="308.33" y="26.3" width="1.88" height="1.55" fill="#3ca04c"/><rect x="310.17" y="26.3" width="1.88" height="1.55" fill="#3ca04c"/></g>
<g opacity="0.76"><rect x="316.83" y="23.3" width="1.72" height="1.55" fill="#3ca04c"/><rect x="313.5" y="24.8" width="1.72" height="1.55" fill="#3ca04c"/><rect x="315.17" y="24.8" width="1.72" height="1.55" fill="#3ca04c"/><rect x="316.83" y="24.8" width="1.72" height="1.55" fill="#3c80d0"/><rect x="315.17" y="26.3" width="1.72" height="1.55" fill="#3c80d0"/><rect x="316.83" y="26.3" width="1.72" height="1.55" fill="#3c80d0"/></g>
<g opacity="0.57"><rect x="320" y="23.3" width="1.72" height="1.55" fill="#3ca04c"/><rect x="321.67" y="23.3" width="1.72" height="1.55" fill="#3ca04c"/><rect x="323.33" y="23.3" width="1.72" height="1.55" fill="#3ca04c"/><rect x="320" y="24.8" width="1.72" height="1.55" fill="#80c18a"/><rect x="320" y="26.3" width="1.72" height="1.55" fill="#3ca04c"/><rect x="321.67" y="26.3" width="1.72" height="1.55" fill="#80c080"/><rect x="323.33" y="26.3" width="1.72" height="1.55" fill="#80c080"/></g>
<g opacity="0.57"><rect x="326.5" y="23.3" width="1.72" height="1.55" fill="#a4a4dc"/><rect x="328.17" y="23.3" width="1.72" height="1.55" fill="#a4a4dc"/><rect x="329.83" y="23.3" width="1.72" height="1.55" fill="#a4a4dc"/><rect x="326.5" y="24.8" width="1.72" height="1.55" fill="#a4a4dc"/><rect x="328.17" y="24.8" width="1.72" height="1.55" fill="#a4a4dc"/><rect x="326.5" y="26.3" width="1.72" height="1.55" fill="#a4a4dc"/><rect x="328.17" y="26.3" width="1.72" height="1.55" fill="#3c6cc4"/><rect x="329.83" y="26.3" width="1.72" height="1.55" fill="#3c6cc4"/></g>
<g opacity="0.76"><rect x="333" y="23.3" width="1.88" height="1.55" fill="#e4d440"/><rect x="334.83" y="23.3" width="1.88" height="1.55" fill="#ede382"/><rect x="333" y="24.8" width="1.88" height="1.55" fill="#ede382"/><rect x="334.83" y="24.8" width="1.88" height="1.55" fill="#e4d440"/><rect x="336.67" y="24.8" width="1.88" height="1.55" fill="#909090"/><rect x="336.67" y="26.3" width="1.88" height="1.55" fill="#909090"/></g>
<g opacity="0.47"><rect x="343.5" y="23.3" width="1.55" height="1.55" fill="#3c6cc4"/><rect x="345" y="23.3" width="1.55" height="1.55" fill="#809fd8"/><rect x="346.5" y="23.3" width="1.55" height="1.55" fill="#809fd8"/><rect x="343.5" y="24.8" width="1.55" height="1.55" fill="#3c6cc4"/><rect x="346.5" y="24.8" width="1.55" height="1.55" fill="#d03838"/><rect x="343.5" y="26.3" width="1.55" height="1.55" fill="#3c6cc4"/><rect x="345" y="26.3" width="1.55" height="1.55" fill="#d03838"/><rect x="346.5" y="26.3" width="1.55" height="1.55" fill="#d03838"/></g>
<g opacity="0.85"><rect x="349.5" y="23.3" width="1.88" height="1.55" fill="#243478"/><rect x="351.33" y="23.3" width="1.88" height="1.55" fill="#243478"/><rect x="353.17" y="23.3" width="1.88" height="1.55" fill="#707ba7"/><rect x="349.5" y="24.8" width="1.88" height="1.55" fill="#707ba7"/><rect x="351.33" y="24.8" width="1.88" height="1.55" fill="#243478"/><rect x="353.17" y="24.8" width="1.88" height="1.55" fill="#d03838"/><rect x="349.5" y="26.3" width="1.88" height="1.55" fill="#707ba7"/><rect x="353.17" y="26.3" width="1.88" height="1.55" fill="#d03838"/></g>
<g opacity="0.76"><rect x="359" y="23.3" width="1.55" height="1.55" fill="#c0c4cc"/><rect x="360.5" y="23.3" width="1.55" height="1.55" fill="#d6d8dd"/><rect x="362" y="23.3" width="1.55" height="1.55" fill="#d6d8dd"/><rect x="359" y="24.8" width="1.55" height="1.55" fill="#c0c4cc"/><rect x="360.5" y="24.8" width="1.55" height="1.55" fill="#c0c4cc"/><rect x="362" y="24.8" width="1.55" height="1.55" fill="#f0f0f0"/><rect x="360.5" y="26.3" width="1.55" height="1.55" fill="#f0f0f0"/><rect x="362" y="26.3" width="1.55" height="1.55" fill="#f0f0f0"/></g>
<g opacity="0.66"><rect x="365.5" y="23.3" width="1.88" height="1.55" fill="#e4d440"/><rect x="369.17" y="23.3" width="1.88" height="1.55" fill="#e4d440"/><rect x="365.5" y="24.8" width="1.88" height="1.55" fill="#e4d440"/><rect x="367.33" y="24.8" width="1.88" height="1.55" fill="#e4d440"/><rect x="365.5" y="26.3" width="1.88" height="1.55" fill="#e4d440"/><rect x="367.33" y="26.3" width="1.88" height="1.55" fill="#3c6cc4"/><rect x="369.17" y="26.3" width="1.88" height="1.55" fill="#3c6cc4"/></g>
<g opacity="0.85"><rect x="375.5" y="23.3" width="1.88" height="1.55" fill="#80cb80"/><rect x="377.33" y="23.3" width="1.88" height="1.55" fill="#80cb80"/><rect x="379.17" y="23.3" width="1.88" height="1.55" fill="#3cb03c"/><rect x="375.5" y="24.8" width="1.88" height="1.55" fill="#80cb80"/><rect x="377.33" y="24.8" width="1.88" height="1.55" fill="#3cb03c"/><rect x="379.17" y="24.8" width="1.88" height="1.55" fill="#e04030"/><rect x="377.33" y="26.3" width="1.88" height="1.55" fill="#e04030"/><rect x="379.17" y="26.3" width="1.88" height="1.55" fill="#e04030"/></g>
<rect x="4.6" y="15.5" width="3.8" height="4.5" rx=".4" fill="#fbfbfd" stroke="#9aa0b0" stroke-width=".35"/>
<g opacity=".92"><rect x="10.6" y="16.1" width="4.4" height="3.8" rx=".3" fill="#d4a41c"/><path d="M10.6 17.5h4.9l-.6 2.5h-4.3z" fill="#f2d050"/><rect x="13.4" y="15.2" width="1.9" height="1.2" fill="#3858b0"/><rect x="17.5" y="15.7" width="4.3" height="4.2" rx=".3" fill="#b08030"/><rect x="17.5" y="15.7" width="1.1" height="4.2" fill="#6a4818"/><rect x="19.1" y="16.5" width="2.1" height=".6" fill="#dcb878"/><rect x="23.7" y="15.7" width="4.4" height="4.2" rx=".3" fill="#3c5cb8"/><rect x="23.7" y="15.7" width="1.1" height="4.2" fill="#1c2c70"/><rect x="25.3" y="16.5" width="2.2" height=".6" fill="#8ca4e0"/><rect x="30.4" y="15.6" width="4.5" height="4.4" rx=".3" fill="#4848a0"/><rect x="31.2" y="15.6" width="2.9" height="1.7" fill="#e2e6f2"/><rect x="31.5" y="18.3" width="2.3" height="1.7" fill="#b4b8d8"/><rect x="36.7" y="15.6" width="4.4" height="4.4" rx=".3" fill="#c4b49c"/><rect x="37.5" y="16.4" width="2.8" height="3" fill="#e2d8c6"/><rect x="43.4" y="17" width="4.6" height="2.5" rx=".3" fill="#9ca0b2"/><rect x="44.2" y="15.4" width="3" height="1.8" fill="#f6f6fa" stroke="#a8acb8" stroke-width=".2"/><rect x="44.2" y="18.9" width="3" height="1.2" fill="#e2e2ea"/><rect x="49.7" y="15.5" width="3.3" height="4.5" fill="#f2f4f8" stroke="#a0a8b8" stroke-width=".3"/><circle cx="53" cy="18.5" r="1.2" fill="#a8c0e8" stroke="#2c54b0" stroke-width=".5"/></g>
<rect x="56.5" y="14.8" width=".4" height="5.2" fill="#b4bac6"/>
<rect x="72" y="14.8" width=".4" height="5.2" fill="#b4bac6"/>
<rect x="107" y="14.8" width=".4" height="5.2" fill="#b4bac6"/>
<rect x="122" y="14.8" width=".4" height="5.2" fill="#b4bac6"/>
<rect x="235.5" y="14.8" width=".4" height="5.2" fill="#b4bac6"/>
<rect x="259" y="14.8" width=".4" height="5.2" fill="#b4bac6"/>
<rect x="307" y="14.8" width=".4" height="5.2" fill="#b4bac6"/>
<rect x="356" y="14.8" width=".4" height="5.2" fill="#b4bac6"/>
<rect x="43" y="23" width=".4" height="5" fill="#b4bac6"/>
<rect x="66.5" y="23" width=".4" height="5" fill="#b4bac6"/>
<rect x="92" y="23" width=".4" height="5" fill="#b4bac6"/>
<rect x="141" y="23" width=".4" height="5" fill="#b4bac6"/>
<rect x="150.5" y="23" width=".4" height="5" fill="#b4bac6"/>
<rect x="191" y="23" width=".4" height="5" fill="#b4bac6"/>
<rect x="226.5" y="23" width=".4" height="5" fill="#b4bac6"/>
<rect x="298" y="23" width=".4" height="5" fill="#b4bac6"/>
<rect x="357.5" y="23" width=".4" height="5" fill="#b4bac6"/>
<rect x="10.8" y="25.5" width="1.3" height=".6" fill="#555c6c"/>
<rect x="29.5" y="25.5" width="1.3" height=".6" fill="#555c6c"/>
<rect x="40.5" y="25.5" width="1.3" height=".6" fill="#555c6c"/>
<rect x="76.5" y="25.5" width="1.3" height=".6" fill="#555c6c"/>
<rect x="110.5" y="25.5" width="1.3" height=".6" fill="#555c6c"/>
<rect x="120.5" y="25.5" width="1.3" height=".6" fill="#555c6c"/>
<rect x="137.5" y="25.5" width="1.3" height=".6" fill="#555c6c"/>
<rect x="150" y="25.5" width="1.3" height=".6" fill="#555c6c"/>
<rect x="188" y="25.5" width="1.3" height=".6" fill="#555c6c"/>
<rect x="255.5" y="25.5" width="1.3" height=".6" fill="#555c6c"/>
<rect x="266.5" y="25.5" width="1.3" height=".6" fill="#555c6c"/>
<rect x="279" y="25.5" width="1.3" height=".6" fill="#555c6c"/>
<rect x="341" y="25.5" width="1.3" height=".6" fill="#555c6c"/>
<rect x="373" y="25.5" width="1.3" height=".6" fill="#555c6c"/>
<rect x="383" y="25.5" width="1.3" height=".6" fill="#555c6c"/>
<path d="M191 17l.9.9.9-.9" stroke="#555" stroke-width=".35" fill="none"/>
<rect x="3.6" y="33.5" width="4.8" height="4.4" fill="#26306e"/>
<path d="M6 33.5v4.4M3.6 35h4.8" stroke="#e8ecf4" stroke-width=".5"/>
<rect x="383.2" y="33.5" width="4.8" height="4.4" fill="#1c2566"/>
<path d="M385.6 33.5v4.4M383.2 35h4.8" stroke="#e8ecf4" stroke-width=".5"/>
<rect x="347.6" y="33" width="8.4" height="5.2" rx=".8" fill="#e3eaf4" stroke="#aab4c4" stroke-width=".4"/>
<rect x="350.5" y="34.8" width="2.6" height="1.6" fill="none" stroke="#a0a8b8" stroke-width=".4"/>
<rect x="357.8" y="33" width="8.4" height="5.2" rx=".8" fill="#e3eaf4" stroke="#aab4c4" stroke-width=".4"/>
<rect x="360.7" y="34.8" width="2.6" height="1.6" fill="none" stroke="#a0a8b8" stroke-width=".4"/>
<rect x="368" y="33" width="8.4" height="5.2" rx=".8" fill="#e3eaf4" stroke="#aab4c4" stroke-width=".4"/>
<rect x="370.9" y="34.8" width="2.6" height="1.6" fill="none" stroke="#a0a8b8" stroke-width=".4"/>
<rect x="726.8" y="32.8" width="9" height="5.2" rx=".8" fill="#c3d6ec" stroke="#7f95b0" stroke-width=".4"/>
<rect x="737.2" y="32.8" width="9" height="5.2" rx=".8" fill="#c3d6ec" stroke="#7f95b0" stroke-width=".4"/>
<rect x="747.4" y="32.8" width="9" height="5.2" rx=".8" fill="#c9432d" stroke="#8a3020" stroke-width=".4"/>
<rect x="730" y="35.8" width="2.8" height=".9" fill="#fff" stroke="#56657a" stroke-width=".3"/>
<rect x="740.4" y="34.4" width="2.8" height="2" fill="none" stroke="#56657a" stroke-width=".4"/>
<path d="M750.6 34.2l2.4 2.4M753 34.2l-2.4 2.4" stroke="#fff" stroke-width=".7"/>
<clipPath id="cl"><rect x="3.3" y="39.5" width="373.6" height="366.8"/></clipPath>
<g clip-path="url(#cl)">
<g opacity="1"><polygon points="38.6,252.07 56.64,254.65 56.66,259.18 38.61,256.6" fill="#38e038"/><polygon points="56.64,254.65 64.57,249.22 64.59,253.75 56.66,259.18" fill="#5af25a"/><polygon points="38.6,252.07 56.64,254.65 64.57,249.22 46.55,246.65" fill="#40ee40"/></g>
<polygon points="155.7,288.7 163.7,282.1 173.6,282.1 181.5,285.8 173.6,291.4" fill="#38e238"/><polygon points="163.1,282.6 163.7,282.1 173.6,282.1 181.5,285.8 179.1,287.4 171.6,285" fill="#72f572"/><circle cx="168.6" cy="277.4" r="4.8" fill="#3cf03c"/>
<rect x="163.9" y="156" width="4.28" height="116.8" fill="#7474f4"/><rect x="168.18" y="156" width="5.22" height="116.8" fill="#6262e6"/>
<polygon points="229,299.1 237,292.5 246.9,292.5 254.8,296.2 246.9,301.8" fill="#38e238"/><polygon points="236.4,293 237,292.5 246.9,292.5 254.8,296.2 252.4,297.8 244.9,295.4" fill="#72f572"/><circle cx="241.9" cy="287.8" r="4.8" fill="#3cf03c"/>
<rect x="237" y="168" width="4.14" height="116.3" fill="#7474f4"/><rect x="241.14" y="168" width="5.06" height="116.3" fill="#6262e6"/>
<path d="M134.95 181L168.65 272M168.65 156L134.95 295.4" stroke="#7878f4" stroke-width="0.9" fill="none"/><path d="M208.1 193.5L241.6 283.5M241.6 168L208.1 306.6" stroke="#7878f4" stroke-width="0.9" fill="none"/>
<polygon points="123.68,181.64 212.31,194.05 252.78,166.08 164.62,153.83" fill="#7d7d7d"/><path d="M131.07 182.68L171.97 154.85M127.1 179.32L215.69 191.72M138.46 183.71L179.31 155.87M130.51 177.01L219.06 189.39M145.84 184.74L186.66 156.89M133.92 174.69L222.43 187.06M153.23 185.78L194.01 157.91M137.33 172.37L225.8 184.73M160.61 186.81L201.35 158.93M140.74 170.05L229.18 182.4M168 187.85L208.7 159.95M144.15 167.73L232.55 180.07M175.39 188.88L216.05 160.97M147.56 165.42L235.92 177.73M182.77 189.92L223.39 161.99M150.98 163.1L239.29 175.4M190.16 190.95L230.74 163.01M154.39 160.78L242.66 173.07M197.54 191.99L238.09 164.04M157.8 158.46L246.04 170.74M204.93 193.02L245.43 165.06M161.21 156.15L249.41 168.41" stroke="#959595" stroke-width=".3" fill="none"/>
<polygon points="56.2,237.22 53.27,237.31 62.52,238.63 65.45,238.53" fill="#4a4abc" stroke="#4a4abc" stroke-width=".3" stroke-linejoin="round"/>
<polygon points="65.45,238.53 62.52,238.63 71.77,239.95 74.7,239.85" fill="#4a4abc" stroke="#4a4abc" stroke-width=".3" stroke-linejoin="round"/>
<polygon points="48.08,260.66 50.22,264.16 59.46,265.49 57.33,261.98" fill="#6b6bff" stroke="#6b6bff" stroke-width=".3" stroke-linejoin="round"/>
<polygon points="53.27,237.31 50.31,241 59.56,242.31 62.52,238.63" fill="#5d5de8" stroke="#5d5de8" stroke-width=".3" stroke-linejoin="round"/>
<polygon points="74.7,239.85 71.77,239.95 81.03,241.26 83.96,241.16" fill="#4a4abc" stroke="#4a4abc" stroke-width=".3" stroke-linejoin="round"/>
<polygon points="57.33,261.98 59.46,265.49 68.72,266.81 66.58,263.31" fill="#6b6bff" stroke="#6b6bff" stroke-width=".3" stroke-linejoin="round"/>
<polygon points="47.31,254.48 48.08,260.66 57.33,261.98 56.57,255.8" fill="#7b7bff" stroke="#7b7bff" stroke-width=".3" stroke-linejoin="round"/>
<polygon points="62.52,238.63 59.56,242.31 68.82,243.63 71.77,239.95" fill="#5d5de8" stroke="#5d5de8" stroke-width=".3" stroke-linejoin="round"/>
<polygon points="50.31,241 48.13,247.28 57.39,248.6 59.56,242.31" fill="#7373ff" stroke="#7373ff" stroke-width=".3" stroke-linejoin="round"/>
<polygon points="48.13,247.28 47.31,254.48 56.57,255.8 57.39,248.6" fill="#7e7eff" stroke="#7e7eff" stroke-width=".3" stroke-linejoin="round"/>
<polygon points="83.96,241.16 81.03,241.26 90.3,242.58 93.22,242.48" fill="#4a4abc" stroke="#4a4abc" stroke-width=".3" stroke-linejoin="round"/>
<polygon points="66.58,263.31 68.72,266.81 77.98,268.14 75.85,264.63" fill="#6b6bff" stroke="#6b6bff" stroke-width=".3" stroke-linejoin="round"/>
<polygon points="56.57,255.8 57.33,261.98 66.58,263.31 65.83,257.13" fill="#7b7bff" stroke="#7b7bff" stroke-width=".3" stroke-linejoin="round"/>
<polygon points="71.77,239.95 68.82,243.63 78.09,244.95 81.03,241.26" fill="#5d5de8" stroke="#5d5de8" stroke-width=".3" stroke-linejoin="round"/>
<polygon points="59.56,242.31 57.39,248.6 66.65,249.92 68.82,243.63" fill="#7373ff" stroke="#7373ff" stroke-width=".3" stroke-linejoin="round"/>
<polygon points="57.39,248.6 56.57,255.8 65.83,257.13 66.65,249.92" fill="#7e7eff" stroke="#7e7eff" stroke-width=".3" stroke-linejoin="round"/>
<polygon points="93.22,242.48 90.3,242.58 99.57,243.9 102.49,243.8" fill="#4a4abc" stroke="#4a4abc" stroke-width=".3" stroke-linejoin="round"/>
<polygon points="75.85,264.63 77.98,268.14 87.24,269.46 85.12,265.96" fill="#6b6bff" stroke="#6b6bff" stroke-width=".3" stroke-linejoin="round"/>
<polygon points="65.83,257.13 66.58,263.31 75.85,264.63 75.09,258.45" fill="#7b7bff" stroke="#7b7bff" stroke-width=".3" stroke-linejoin="round"/>
<polygon points="81.03,241.26 78.09,244.95 87.36,246.27 90.3,242.58" fill="#5d5de8" stroke="#5d5de8" stroke-width=".3" stroke-linejoin="round"/>
<polygon points="68.82,243.63 66.65,249.92 75.91,251.24 78.09,244.95" fill="#7373ff" stroke="#7373ff" stroke-width=".3" stroke-linejoin="round"/>
<polygon points="66.65,249.92 65.83,257.13 75.09,258.45 75.91,251.24" fill="#7e7eff" stroke="#7e7eff" stroke-width=".3" stroke-linejoin="round"/>
<polygon points="102.49,243.8 99.57,243.9 108.85,245.22 111.77,245.12" fill="#4a4abc" stroke="#4a4abc" stroke-width=".3" stroke-linejoin="round"/>
<polygon points="85.12,265.96 87.24,269.46 96.51,270.79 94.39,267.29" fill="#6b6bff" stroke="#6b6bff" stroke-width=".3" stroke-linejoin="round"/>
<polygon points="75.09,258.45 75.85,264.63 85.12,265.96 84.36,259.77" fill="#7b7bff" stroke="#7b7bff" stroke-width=".3" stroke-linejoin="round"/>
<polygon points="90.3,242.58 87.36,246.27 96.63,247.59 99.57,243.9" fill="#5d5de8" stroke="#5d5de8" stroke-width=".3" stroke-linejoin="round"/>
<polygon points="78.09,244.95 75.91,251.24 85.18,252.57 87.36,246.27" fill="#7373ff" stroke="#7373ff" stroke-width=".3" stroke-linejoin="round"/>
<polygon points="105.79,272.12 108.7,272 120.23,271.26 116.63,271.42" fill="#5c5ce4" stroke="#5c5ce4" stroke-width=".3" stroke-linejoin="round"/>
<polygon points="75.91,251.24 75.09,258.45 84.36,259.77 85.18,252.57" fill="#7e7eff" stroke="#7e7eff" stroke-width=".3" stroke-linejoin="round"/>
<polygon points="94.39,267.29 96.51,270.79 105.79,272.12 103.67,268.62" fill="#6b6bff" stroke="#6b6bff" stroke-width=".3" stroke-linejoin="round"/>
<polygon points="84.36,259.77 85.12,265.96 94.39,267.29 93.64,261.1" fill="#7b7bff" stroke="#7b7bff" stroke-width=".3" stroke-linejoin="round"/>
<polygon points="99.57,243.9 96.63,247.59 105.91,248.91 108.85,245.22" fill="#5d5de8" stroke="#5d5de8" stroke-width=".3" stroke-linejoin="round"/>
<polygon points="87.36,246.27 85.18,252.57 94.46,253.89 96.63,247.59" fill="#7373ff" stroke="#7373ff" stroke-width=".3" stroke-linejoin="round"/>
<polygon points="85.18,252.57 84.36,259.77 93.64,261.1 94.46,253.89" fill="#7e7eff" stroke="#7e7eff" stroke-width=".3" stroke-linejoin="round"/>
<polygon points="108.85,245.22 105.91,248.91 108.29,248.76 110.62,245.1" fill="#5353d1" stroke="#5353d1" stroke-width=".3" stroke-linejoin="round"/>
<polygon points="116.63,271.42 120.23,271.26 130.01,265.84 125.81,266.33" fill="#6f6fff" stroke="#6f6fff" stroke-width=".3" stroke-linejoin="round"/>
<polygon points="103.67,268.62 105.79,272.12 116.63,271.42 112.69,268.03" fill="#7272ff" stroke="#7272ff" stroke-width=".3" stroke-linejoin="round"/>
<polygon points="93.64,261.1 94.39,267.29 103.67,268.62 102.92,262.43" fill="#7b7bff" stroke="#7b7bff" stroke-width=".3" stroke-linejoin="round"/>
<polygon points="110.62,245.1 108.29,248.76 110.31,247.64 112.12,244.27" fill="#4a4abc" stroke="#4a4abc" stroke-width=".3" stroke-linejoin="round"/>
<polygon points="96.63,247.59 94.46,253.89 103.74,255.21 105.91,248.91" fill="#7373ff" stroke="#7373ff" stroke-width=".3" stroke-linejoin="round"/>
<polygon points="112.12,244.27 110.31,247.64 111.65,245.72 113.11,242.85" fill="#4a4abc" stroke="#4a4abc" stroke-width=".3" stroke-linejoin="round"/>
<polygon points="94.46,253.89 93.64,261.1 102.92,262.43 103.74,255.21" fill="#7e7eff" stroke="#7e7eff" stroke-width=".3" stroke-linejoin="round"/>
<polygon points="105.91,248.91 103.74,255.21 107.88,254.94 108.29,248.76" fill="#6c6cff" stroke="#6c6cff" stroke-width=".3" stroke-linejoin="round"/>
<polygon points="102.92,262.43 103.67,268.62 112.69,268.03 109.49,262" fill="#7e7eff" stroke="#7e7eff" stroke-width=".3" stroke-linejoin="round"/>
<polygon points="112.69,268.03 116.63,271.42 125.81,266.33 120.34,263.79" fill="#8080ff" stroke="#8080ff" stroke-width=".3" stroke-linejoin="round"/>
<polygon points="136.54,256.56 137.99,253.68 140.15,242.57 138.82,244.83" fill="#6f6fff" stroke="#6f6fff" stroke-width=".3" stroke-linejoin="round"/>
<polygon points="108.29,248.76 107.88,254.94 111.39,253 110.31,247.64" fill="#5d5de8" stroke="#5d5de8" stroke-width=".3" stroke-linejoin="round"/>
<polygon points="103.74,255.21 102.92,262.43 109.49,262 107.88,254.94" fill="#7b7bff" stroke="#7b7bff" stroke-width=".3" stroke-linejoin="round"/>
<polygon points="125.81,266.33 130.01,265.84 136.54,256.56 131.95,257.6" fill="#8080ff" stroke="#8080ff" stroke-width=".3" stroke-linejoin="round"/>
<polygon points="110.31,247.64 111.39,253 113.72,249.66 111.65,245.72" fill="#5151cd" stroke="#5151cd" stroke-width=".3" stroke-linejoin="round"/>
<polygon points="109.49,262 112.69,268.03 120.34,263.79 115.06,258.91" fill="#8383ff" stroke="#8383ff" stroke-width=".3" stroke-linejoin="round"/>
<polygon points="107.88,254.94 109.49,262 115.06,258.91 111.39,253" fill="#7676ff" stroke="#7676ff" stroke-width=".3" stroke-linejoin="round"/>
<polygon points="111.65,245.72 113.72,249.66 114.54,245.46 112.12,243.3" fill="#4a4abc" stroke="#4a4abc" stroke-width=".3" stroke-linejoin="round"/>
<polygon points="138.82,244.83 140.15,242.57 140.14,232.82 138.81,235.07" fill="#7171ff" stroke="#7171ff" stroke-width=".3" stroke-linejoin="round"/>
<polygon points="120.34,263.79 125.81,266.33 131.95,257.6 125.45,256.52" fill="#8c8cff" stroke="#8c8cff" stroke-width=".3" stroke-linejoin="round"/>
<polygon points="131.95,257.6 136.54,256.56 138.82,244.83 134.1,246.57" fill="#8a8aff" stroke="#8a8aff" stroke-width=".3" stroke-linejoin="round"/>
<polygon points="112.12,243.3 114.54,245.46 114.52,235.7 112.1,233.55" fill="#4a4abc" stroke="#4a4abc" stroke-width=".3" stroke-linejoin="round"/>
<polygon points="111.39,253 115.06,258.91 118.77,253.62 113.72,249.66" fill="#7171ff" stroke="#7171ff" stroke-width=".3" stroke-linejoin="round"/>
<polygon points="138.81,235.07 140.14,232.82 140.13,223.06 138.8,225.3" fill="#7171ff" stroke="#7171ff" stroke-width=".3" stroke-linejoin="round"/>
<polygon points="115.06,258.91 120.34,263.79 125.45,256.52 118.77,253.62" fill="#8787ff" stroke="#8787ff" stroke-width=".3" stroke-linejoin="round"/>
<polygon points="113.72,249.66 118.77,253.62 120.07,246.94 114.54,245.46" fill="#6e6eff" stroke="#6e6eff" stroke-width=".3" stroke-linejoin="round"/>
<polygon points="112.1,233.55 114.52,235.7 114.5,225.93 112.08,223.78" fill="#4a4abc" stroke="#4a4abc" stroke-width=".3" stroke-linejoin="round"/>
<polygon points="134.1,246.57 138.82,244.83 138.81,235.07 134.08,236.81" fill="#8c8cff" stroke="#8c8cff" stroke-width=".3" stroke-linejoin="round"/>
<polygon points="125.45,256.52 131.95,257.6 134.1,246.57 127.23,247.35" fill="#9393ff" stroke="#9393ff" stroke-width=".3" stroke-linejoin="round"/>
<polygon points="138.8,225.3 140.13,223.06 140.11,213.29 138.79,215.53" fill="#7171ff" stroke="#7171ff" stroke-width=".3" stroke-linejoin="round"/>
<polygon points="118.77,253.62 125.45,256.52 127.23,247.35 120.07,246.94" fill="#8989ff" stroke="#8989ff" stroke-width=".3" stroke-linejoin="round"/>
<polygon points="114.54,245.46 120.07,246.94 120.05,237.17 114.52,235.7" fill="#6d6dff" stroke="#6d6dff" stroke-width=".3" stroke-linejoin="round"/>
<polygon points="112.08,223.78 114.5,225.93 114.48,216.16 112.06,214.02" fill="#4a4abc" stroke="#4a4abc" stroke-width=".3" stroke-linejoin="round"/>
<polygon points="134.08,236.81 138.81,235.07 138.8,225.3 134.07,227.04" fill="#8c8cff" stroke="#8c8cff" stroke-width=".3" stroke-linejoin="round"/>
<polygon points="138.79,215.53 140.11,213.29 140.1,203.52 138.77,205.76" fill="#7171ff" stroke="#7171ff" stroke-width=".3" stroke-linejoin="round"/>
<polygon points="127.23,247.35 134.1,246.57 134.08,236.81 127.21,237.58" fill="#9595ff" stroke="#9595ff" stroke-width=".3" stroke-linejoin="round"/>
<polygon points="120.07,246.94 127.23,247.35 127.21,237.58 120.05,237.17" fill="#8a8aff" stroke="#8a8aff" stroke-width=".3" stroke-linejoin="round"/>
<polygon points="114.52,235.7 120.05,237.17 120.03,227.4 114.5,225.93" fill="#6d6dff" stroke="#6d6dff" stroke-width=".3" stroke-linejoin="round"/>
<polygon points="112.06,214.02 114.48,216.16 114.46,206.38 112.05,204.25" fill="#4a4abc" stroke="#4a4abc" stroke-width=".3" stroke-linejoin="round"/>
<polygon points="134.07,227.04 138.8,225.3 138.79,215.53 134.05,217.27" fill="#8c8cff" stroke="#8c8cff" stroke-width=".3" stroke-linejoin="round"/>
<polygon points="138.77,205.76 140.1,203.52 140.09,193.75 138.76,195.98" fill="#7171ff" stroke="#7171ff" stroke-width=".3" stroke-linejoin="round"/>
<polygon points="127.21,237.58 134.08,236.81 134.07,227.04 127.2,227.81" fill="#9595ff" stroke="#9595ff" stroke-width=".3" stroke-linejoin="round"/>
<polygon points="120.05,237.17 127.21,237.58 127.2,227.81 120.03,227.4" fill="#8a8aff" stroke="#8a8aff" stroke-width=".3" stroke-linejoin="round"/>
<polygon points="114.5,225.93 120.03,227.4 120.02,217.63 114.48,216.16" fill="#6d6dff" stroke="#6d6dff" stroke-width=".3" stroke-linejoin="round"/>
<polygon points="112.05,204.25 114.46,206.38 114.45,196.6 112.03,194.47" fill="#4a4abc" stroke="#4a4abc" stroke-width=".3" stroke-linejoin="round"/>
<polygon points="134.05,217.27 138.79,215.53 138.77,205.76 134.04,207.49" fill="#8c8cff" stroke="#8c8cff" stroke-width=".3" stroke-linejoin="round"/>
<polygon points="138.76,195.98 140.09,193.75 140.08,183.97 138.75,186.19" fill="#7171ff" stroke="#7171ff" stroke-width=".3" stroke-linejoin="round"/>
<polygon points="127.2,227.81 134.07,227.04 134.05,217.27 127.18,218.04" fill="#9595ff" stroke="#9595ff" stroke-width=".3" stroke-linejoin="round"/>
<polygon points="120.03,227.4 127.2,227.81 127.18,218.04 120.02,217.63" fill="#8a8aff" stroke="#8a8aff" stroke-width=".3" stroke-linejoin="round"/>
<polygon points="114.48,216.16 120.02,217.63 120,207.85 114.46,206.38" fill="#6d6dff" stroke="#6d6dff" stroke-width=".3" stroke-linejoin="round"/>
<polygon points="112.03,194.47 114.45,196.6 114.43,186.82 112.01,184.69" fill="#4a4abc" stroke="#4a4abc" stroke-width=".3" stroke-linejoin="round"/>
<polygon points="134.04,207.49 138.77,205.76 138.76,195.98 134.03,197.71" fill="#8c8cff" stroke="#8c8cff" stroke-width=".3" stroke-linejoin="round"/>
<polygon points="138.75,186.19 140.08,183.97 140.06,174.19 138.73,176.4" fill="#7171ff" stroke="#7171ff" stroke-width=".3" stroke-linejoin="round"/>
<polygon points="127.18,218.04 134.05,217.27 134.04,207.49 127.17,208.26" fill="#9595ff" stroke="#9595ff" stroke-width=".3" stroke-linejoin="round"/>
<polygon points="120.02,217.63 127.18,218.04 127.17,208.26 120,207.85" fill="#8a8aff" stroke="#8a8aff" stroke-width=".3" stroke-linejoin="round"/>
<polygon points="114.46,206.38 120,207.85 119.98,198.07 114.45,196.6" fill="#6d6dff" stroke="#6d6dff" stroke-width=".3" stroke-linejoin="round"/>
<polygon points="112.01,184.69 114.43,186.82 114.41,177.03 111.99,174.9" fill="#4a4abc" stroke="#4a4abc" stroke-width=".3" stroke-linejoin="round"/>
<polygon points="134.03,197.71 138.76,195.98 138.75,186.19 134.01,187.92" fill="#8c8cff" stroke="#8c8cff" stroke-width=".3" stroke-linejoin="round"/>
<polygon points="138.73,176.4 140.06,174.19 140.05,164.4 138.72,166.61" fill="#7171ff" stroke="#7171ff" stroke-width=".3" stroke-linejoin="round"/>
<polygon points="127.17,208.26 134.04,207.49 134.03,197.71 127.15,198.47" fill="#9595ff" stroke="#9595ff" stroke-width=".3" stroke-linejoin="round"/>
<polygon points="120,207.85 127.17,208.26 127.15,198.47 119.98,198.07" fill="#8a8aff" stroke="#8a8aff" stroke-width=".3" stroke-linejoin="round"/>
<polygon points="114.45,196.6 119.98,198.07 119.96,188.28 114.43,186.82" fill="#6d6dff" stroke="#6d6dff" stroke-width=".3" stroke-linejoin="round"/>
<polygon points="111.99,174.9 114.41,177.03 114.39,167.23 111.97,165.11" fill="#4a4abc" stroke="#4a4abc" stroke-width=".3" stroke-linejoin="round"/>
<polygon points="138.72,166.61 140.05,164.4 140.52,161.97 139.07,164.8" fill="#6f6fff" stroke="#6f6fff" stroke-width=".3" stroke-linejoin="round"/>
<polygon points="134.01,187.92 138.75,186.19 138.73,176.4 134,178.13" fill="#8c8cff" stroke="#8c8cff" stroke-width=".3" stroke-linejoin="round"/>
<polygon points="127.15,198.47 134.03,197.71 134.01,187.92 127.13,188.68" fill="#9595ff" stroke="#9595ff" stroke-width=".3" stroke-linejoin="round"/>
<polygon points="119.98,198.07 127.15,198.47 127.13,188.68 119.96,188.28" fill="#8a8aff" stroke="#8a8aff" stroke-width=".3" stroke-linejoin="round"/>
<polygon points="114.43,186.82 119.96,188.28 119.95,178.49 114.41,177.03" fill="#6d6dff" stroke="#6d6dff" stroke-width=".3" stroke-linejoin="round"/>
<polygon points="115.59,151.11 114.12,153.95 120.32,145.08 122.13,141.75" fill="#4a4abc" stroke="#4a4abc" stroke-width=".3" stroke-linejoin="round"/>
<polygon points="111.97,165.11 114.39,167.23 116.2,157.86 114.12,153.95" fill="#4a4abc" stroke="#4a4abc" stroke-width=".3" stroke-linejoin="round"/>
<polygon points="134,178.13 138.73,176.4 138.72,166.61 133.98,168.33" fill="#8c8cff" stroke="#8c8cff" stroke-width=".3" stroke-linejoin="round"/>
<polygon points="127.13,188.68 134.01,187.92 134,178.13 127.12,178.89" fill="#9595ff" stroke="#9595ff" stroke-width=".3" stroke-linejoin="round"/>
<polygon points="119.96,188.28 127.13,188.68 127.12,178.89 119.95,178.49" fill="#8a8aff" stroke="#8a8aff" stroke-width=".3" stroke-linejoin="round"/>
<polygon points="114.41,177.03 119.95,178.49 119.93,168.69 114.39,167.23" fill="#6d6dff" stroke="#6d6dff" stroke-width=".3" stroke-linejoin="round"/>
<polygon points="133.98,168.33 138.72,166.61 139.07,164.8 134.47,165.81" fill="#8a8aff" stroke="#8a8aff" stroke-width=".3" stroke-linejoin="round"/>
<polygon points="134.47,165.81 139.07,164.8 140.08,163.37 135.87,163.81" fill="#8080ff" stroke="#8080ff" stroke-width=".3" stroke-linejoin="round"/>
<polygon points="127.12,178.89 134,178.13 133.98,168.33 127.1,169.09" fill="#9595ff" stroke="#9595ff" stroke-width=".3" stroke-linejoin="round"/>
<polygon points="135.87,163.81 140.08,163.37 141.58,162.53 137.97,162.64" fill="#6f6fff" stroke="#6f6fff" stroke-width=".3" stroke-linejoin="round"/>
<polygon points="119.95,178.49 127.12,178.89 127.1,169.09 119.93,168.69" fill="#8a8aff" stroke="#8a8aff" stroke-width=".3" stroke-linejoin="round"/>
<polygon points="114.12,153.95 116.2,157.86 121.4,150.41 120.32,145.08" fill="#5151cd" stroke="#5151cd" stroke-width=".3" stroke-linejoin="round"/>
<polygon points="114.39,167.23 119.93,168.69 121.26,161.8 116.2,157.86" fill="#6e6eff" stroke="#6e6eff" stroke-width=".3" stroke-linejoin="round"/>
<polygon points="122.13,141.75 120.32,145.08 129.61,139.86 131.94,136.25" fill="#4a4abc" stroke="#4a4abc" stroke-width=".3" stroke-linejoin="round"/>
<polygon points="137.97,162.64 141.58,162.53 143.36,162.41 140.45,162.47" fill="#5c5ce4" stroke="#5c5ce4" stroke-width=".3" stroke-linejoin="round"/>
<polygon points="127.1,169.09 133.98,168.33 134.47,165.81 127.95,164.71" fill="#9393ff" stroke="#9393ff" stroke-width=".3" stroke-linejoin="round"/>
<polygon points="119.93,168.69 127.1,169.09 127.95,164.71 121.26,161.8" fill="#8989ff" stroke="#8989ff" stroke-width=".3" stroke-linejoin="round"/>
<polygon points="127.95,164.71 134.47,165.81 135.87,163.81 130.38,161.23" fill="#8c8cff" stroke="#8c8cff" stroke-width=".3" stroke-linejoin="round"/>
<polygon points="116.2,157.86 121.26,161.8 125.09,156.33 121.4,150.41" fill="#7171ff" stroke="#7171ff" stroke-width=".3" stroke-linejoin="round"/>
<polygon points="146.44,135.4 143.53,135.44 152.85,136.73 155.75,136.68" fill="#4a4abc" stroke="#4a4abc" stroke-width=".3" stroke-linejoin="round"/>
<polygon points="130.38,161.23 135.87,163.81 137.97,162.64 134.03,159.19" fill="#8080ff" stroke="#8080ff" stroke-width=".3" stroke-linejoin="round"/>
<polygon points="121.26,161.8 127.95,164.71 130.38,161.23 125.09,156.33" fill="#8787ff" stroke="#8787ff" stroke-width=".3" stroke-linejoin="round"/>
<polygon points="120.32,145.08 121.4,150.41 129.2,146.04 129.61,139.86" fill="#5d5de8" stroke="#5d5de8" stroke-width=".3" stroke-linejoin="round"/>
<polygon points="131.94,136.25 129.61,139.86 140.59,139.1 143.53,135.44" fill="#5353d1" stroke="#5353d1" stroke-width=".3" stroke-linejoin="round"/>
<polygon points="134.03,159.19 137.97,162.64 140.45,162.47 138.34,158.89" fill="#7272ff" stroke="#7272ff" stroke-width=".3" stroke-linejoin="round"/>
<polygon points="125.09,156.33 130.38,161.23 134.03,159.19 130.82,153.11" fill="#8383ff" stroke="#8383ff" stroke-width=".3" stroke-linejoin="round"/>
<polygon points="121.4,150.41 125.09,156.33 130.82,153.11 129.2,146.04" fill="#7676ff" stroke="#7676ff" stroke-width=".3" stroke-linejoin="round"/>
<polygon points="155.75,136.68 152.85,136.73 162.17,138.02 165.07,137.98" fill="#4a4abc" stroke="#4a4abc" stroke-width=".3" stroke-linejoin="round"/>
<polygon points="138.34,158.89 140.45,162.47 149.76,163.76 147.66,160.19" fill="#6b6bff" stroke="#6b6bff" stroke-width=".3" stroke-linejoin="round"/>
<polygon points="129.61,139.86 129.2,146.04 138.42,145.4 140.59,139.1" fill="#6c6cff" stroke="#6c6cff" stroke-width=".3" stroke-linejoin="round"/>
<polygon points="143.53,135.44 140.59,139.1 149.92,140.39 152.85,136.73" fill="#5d5de8" stroke="#5d5de8" stroke-width=".3" stroke-linejoin="round"/>
<polygon points="130.82,153.11 134.03,159.19 138.34,158.89 137.6,152.65" fill="#7e7eff" stroke="#7e7eff" stroke-width=".3" stroke-linejoin="round"/>
<polygon points="129.2,146.04 130.82,153.11 137.6,152.65 138.42,145.4" fill="#7b7bff" stroke="#7b7bff" stroke-width=".3" stroke-linejoin="round"/>
<polygon points="165.07,137.98 162.17,138.02 171.5,139.31 174.4,139.27" fill="#4a4abc" stroke="#4a4abc" stroke-width=".3" stroke-linejoin="round"/>
<polygon points="147.66,160.19 149.76,163.76 159.09,165.06 156.98,161.49" fill="#6b6bff" stroke="#6b6bff" stroke-width=".3" stroke-linejoin="round"/>
<polygon points="137.6,152.65 138.34,158.89 147.66,160.19 146.92,153.94" fill="#7b7bff" stroke="#7b7bff" stroke-width=".3" stroke-linejoin="round"/>
<polygon points="152.85,136.73 149.92,140.39 159.24,141.69 162.17,138.02" fill="#5d5de8" stroke="#5d5de8" stroke-width=".3" stroke-linejoin="round"/>
<polygon points="140.59,139.1 138.42,145.4 147.75,146.69 149.92,140.39" fill="#7373ff" stroke="#7373ff" stroke-width=".3" stroke-linejoin="round"/>
<polygon points="138.42,145.4 137.6,152.65 146.92,153.94 147.75,146.69" fill="#7e7eff" stroke="#7e7eff" stroke-width=".3" stroke-linejoin="round"/>
<polygon points="174.4,139.27 171.5,139.31 180.84,140.6 183.73,140.56" fill="#4a4abc" stroke="#4a4abc" stroke-width=".3" stroke-linejoin="round"/>
<polygon points="156.98,161.49 159.09,165.06 168.42,166.36 166.32,162.79" fill="#6b6bff" stroke="#6b6bff" stroke-width=".3" stroke-linejoin="round"/>
<polygon points="146.92,153.94 147.66,160.19 156.98,161.49 156.25,155.24" fill="#7b7bff" stroke="#7b7bff" stroke-width=".3" stroke-linejoin="round"/>
<polygon points="268.8,263.29 267.65,264.82 268.66,266.54 270.2,265.68" fill="#6a6aff" stroke="#6a6aff" stroke-width=".3" stroke-linejoin="round"/>
<polygon points="162.17,138.02 159.24,141.69 168.58,142.98 171.5,139.31" fill="#5d5de8" stroke="#5d5de8" stroke-width=".3" stroke-linejoin="round"/>
<polygon points="270.2,265.68 268.66,266.54 270.17,267.8 272.31,267.44" fill="#5d5de8" stroke="#5d5de8" stroke-width=".3" stroke-linejoin="round"/>
<polygon points="268.31,260.63 267.3,262.91 267.65,264.82 268.8,263.29" fill="#6f6fff" stroke="#6f6fff" stroke-width=".3" stroke-linejoin="round"/>
<polygon points="149.92,140.39 147.75,146.69 157.08,147.99 159.24,141.69" fill="#7373ff" stroke="#7373ff" stroke-width=".3" stroke-linejoin="round"/>
<polygon points="272.31,267.44 270.17,267.8 271.96,268.43 274.8,268.31" fill="#4c4cc0" stroke="#4c4cc0" stroke-width=".3" stroke-linejoin="round"/>
<polygon points="244.82,273.54 242.45,273.35 248.63,283.88 249.97,282.3" fill="#4e4ec6" stroke="#4e4ec6" stroke-width=".3" stroke-linejoin="round"/>
<polygon points="249.97,282.3 248.63,283.88 257.9,291.64 257.69,288.77" fill="#5757da" stroke="#5757da" stroke-width=".3" stroke-linejoin="round"/>
<polygon points="147.75,146.69 146.92,153.94 156.25,155.24 157.08,147.99" fill="#7e7eff" stroke="#7e7eff" stroke-width=".3" stroke-linejoin="round"/>
<polygon points="183.73,140.56 180.84,140.6 190.18,141.9 193.07,141.85" fill="#4a4abc" stroke="#4a4abc" stroke-width=".3" stroke-linejoin="round"/>
<polygon points="268.33,250.84 267.32,253.12 267.3,262.91 268.31,260.63" fill="#6f6fff" stroke="#6f6fff" stroke-width=".3" stroke-linejoin="round"/>
<polygon points="243.02,263.82 240.29,261.67 242.45,273.35 244.82,273.54" fill="#4a4abd" stroke="#4a4abd" stroke-width=".3" stroke-linejoin="round"/>
<polygon points="166.32,162.79 168.42,166.36 177.75,167.66 175.66,164.09" fill="#6b6bff" stroke="#6b6bff" stroke-width=".3" stroke-linejoin="round"/>
<polygon points="274.8,268.31 271.96,268.43 281.34,269.76 284.18,269.65" fill="#4a4abc" stroke="#4a4abc" stroke-width=".3" stroke-linejoin="round"/>
<polygon points="156.25,155.24 156.98,161.49 166.32,162.79 165.58,156.54" fill="#7b7bff" stroke="#7b7bff" stroke-width=".3" stroke-linejoin="round"/>
<polygon points="257.69,288.77 257.9,291.64 268.86,295.47 266.8,291.96" fill="#6464f6" stroke="#6464f6" stroke-width=".3" stroke-linejoin="round"/>
<polygon points="171.5,139.31 168.58,142.98 177.92,144.27 180.84,140.6" fill="#5d5de8" stroke="#5d5de8" stroke-width=".3" stroke-linejoin="round"/>
<polygon points="159.24,141.69 157.08,147.99 166.41,149.29 168.58,142.98" fill="#7373ff" stroke="#7373ff" stroke-width=".3" stroke-linejoin="round"/>
<polygon points="243.03,254.02 240.3,251.88 240.29,261.67 243.02,263.82" fill="#4a4abc" stroke="#4a4abc" stroke-width=".3" stroke-linejoin="round"/>
<polygon points="268.35,241.04 267.34,243.31 267.32,253.12 268.33,250.84" fill="#6f6fff" stroke="#6f6fff" stroke-width=".3" stroke-linejoin="round"/>
<polygon points="157.08,147.99 156.25,155.24 165.58,156.54 166.41,149.29" fill="#7e7eff" stroke="#7e7eff" stroke-width=".3" stroke-linejoin="round"/>
<polygon points="193.07,141.85 190.18,141.9 199.53,143.19 202.42,143.14" fill="#4a4abc" stroke="#4a4abc" stroke-width=".3" stroke-linejoin="round"/>
<polygon points="267.65,264.82 263.27,267.29 264.63,269.6 268.66,266.54" fill="#8686ff" stroke="#8686ff" stroke-width=".3" stroke-linejoin="round"/>
<polygon points="268.66,266.54 264.63,269.6 266.67,271.31 270.17,267.8" fill="#7979ff" stroke="#7979ff" stroke-width=".3" stroke-linejoin="round"/>
<polygon points="267.3,262.91 262.8,264.73 263.27,267.29 267.65,264.82" fill="#8b8bff" stroke="#8b8bff" stroke-width=".3" stroke-linejoin="round"/>
<polygon points="175.66,164.09 177.75,167.66 187.09,168.96 185,165.39" fill="#6b6bff" stroke="#6b6bff" stroke-width=".3" stroke-linejoin="round"/>
<polygon points="250.09,272.33 244.82,273.54 249.97,282.3 253.84,278.71" fill="#7171ff" stroke="#7171ff" stroke-width=".3" stroke-linejoin="round"/>
<polygon points="270.17,267.8 266.67,271.31 269.08,272.15 271.96,268.43" fill="#6868ff" stroke="#6868ff" stroke-width=".3" stroke-linejoin="round"/>
<polygon points="284.18,269.65 281.34,269.76 290.74,271.1 293.57,270.98" fill="#4a4abc" stroke="#4a4abc" stroke-width=".3" stroke-linejoin="round"/>
<polygon points="253.84,278.71 249.97,282.3 257.69,288.77 259.46,283.42" fill="#7474ff" stroke="#7474ff" stroke-width=".3" stroke-linejoin="round"/>
<polygon points="165.58,156.54 166.32,162.79 175.66,164.09 174.92,157.84" fill="#7b7bff" stroke="#7b7bff" stroke-width=".3" stroke-linejoin="round"/>
<polygon points="266.8,291.96 268.86,295.47 278.24,296.81 276.19,293.3" fill="#6b6bff" stroke="#6b6bff" stroke-width=".3" stroke-linejoin="round"/>
<polygon points="248.78,265.25 243.02,263.82 244.82,273.54 250.09,272.33" fill="#7070ff" stroke="#7070ff" stroke-width=".3" stroke-linejoin="round"/>
<polygon points="180.84,140.6 177.92,144.27 187.26,145.57 190.18,141.9" fill="#5d5de8" stroke="#5d5de8" stroke-width=".3" stroke-linejoin="round"/>
<polygon points="168.58,142.98 166.41,149.29 175.75,150.58 177.92,144.27" fill="#7373ff" stroke="#7373ff" stroke-width=".3" stroke-linejoin="round"/>
<polygon points="243.04,244.22 240.31,242.08 240.3,251.88 243.03,254.02" fill="#4a4abc" stroke="#4a4abc" stroke-width=".3" stroke-linejoin="round"/>
<polygon points="267.32,253.12 262.82,254.93 262.8,264.73 267.3,262.91" fill="#8b8bff" stroke="#8b8bff" stroke-width=".3" stroke-linejoin="round"/>
<polygon points="268.37,231.24 267.36,233.51 267.34,243.31 268.35,241.04" fill="#6f6fff" stroke="#6f6fff" stroke-width=".3" stroke-linejoin="round"/>
<polygon points="271.96,268.43 269.08,272.15 278.46,273.49 281.34,269.76" fill="#5d5de8" stroke="#5d5de8" stroke-width=".3" stroke-linejoin="round"/>
<polygon points="259.46,283.42 257.69,288.77 266.8,291.96 266.1,285.74" fill="#7979ff" stroke="#7979ff" stroke-width=".3" stroke-linejoin="round"/>
<polygon points="166.41,149.29 165.58,156.54 174.92,157.84 175.75,150.58" fill="#7e7eff" stroke="#7e7eff" stroke-width=".3" stroke-linejoin="round"/>
<polygon points="263.27,267.29 256.84,270.04 259.21,274.06 264.63,269.6" fill="#9191ff" stroke="#9191ff" stroke-width=".3" stroke-linejoin="round"/>
<polygon points="202.42,143.14 199.53,143.19 208.89,144.49 211.77,144.44" fill="#4a4abc" stroke="#4a4abc" stroke-width=".3" stroke-linejoin="round"/>
<polygon points="256.84,270.04 250.09,272.33 253.84,278.71 259.21,274.06" fill="#8a8aff" stroke="#8a8aff" stroke-width=".3" stroke-linejoin="round"/>
<polygon points="264.63,269.6 259.21,274.06 262.75,277.03 266.67,271.31" fill="#8888ff" stroke="#8888ff" stroke-width=".3" stroke-linejoin="round"/>
<polygon points="262.8,264.73 256.02,265.58 256.84,270.04 263.27,267.29" fill="#9595ff" stroke="#9595ff" stroke-width=".3" stroke-linejoin="round"/>
<polygon points="259.21,274.06 253.84,278.71 259.46,283.42 262.75,277.03" fill="#8686ff" stroke="#8686ff" stroke-width=".3" stroke-linejoin="round"/>
<polygon points="248.79,255.45 243.03,254.02 243.02,263.82 248.78,265.25" fill="#7070ff" stroke="#7070ff" stroke-width=".3" stroke-linejoin="round"/>
<polygon points="185,165.39 187.09,168.96 196.44,170.27 194.35,166.69" fill="#6b6bff" stroke="#6b6bff" stroke-width=".3" stroke-linejoin="round"/>
<polygon points="256.02,265.58 248.78,265.25 250.09,272.33 256.84,270.04" fill="#8b8bff" stroke="#8b8bff" stroke-width=".3" stroke-linejoin="round"/>
<polygon points="266.67,271.31 262.75,277.03 266.93,278.49 269.08,272.15" fill="#7b7bff" stroke="#7b7bff" stroke-width=".3" stroke-linejoin="round"/>
<polygon points="293.57,270.98 290.74,271.1 300.13,272.43 302.97,272.32" fill="#4a4abc" stroke="#4a4abc" stroke-width=".3" stroke-linejoin="round"/>
<polygon points="174.92,157.84 175.66,164.09 185,165.39 184.27,159.14" fill="#7b7bff" stroke="#7b7bff" stroke-width=".3" stroke-linejoin="round"/>
<polygon points="243.06,234.41 240.32,232.27 240.31,242.08 243.04,244.22" fill="#4a4abc" stroke="#4a4abc" stroke-width=".3" stroke-linejoin="round"/>
<polygon points="267.34,243.31 262.84,245.12 262.82,254.93 267.32,253.12" fill="#8b8bff" stroke="#8b8bff" stroke-width=".3" stroke-linejoin="round"/>
<polygon points="276.19,293.3 278.24,296.81 287.63,298.16 285.58,294.64" fill="#6b6bff" stroke="#6b6bff" stroke-width=".3" stroke-linejoin="round"/>
<polygon points="262.75,277.03 259.46,283.42 266.1,285.74 266.93,278.49" fill="#8181ff" stroke="#8181ff" stroke-width=".3" stroke-linejoin="round"/>
<polygon points="268.39,221.43 267.38,223.7 267.36,233.51 268.37,231.24" fill="#6f6fff" stroke="#6f6fff" stroke-width=".3" stroke-linejoin="round"/>
<polygon points="190.18,141.9 187.26,145.57 196.62,146.86 199.53,143.19" fill="#5d5de8" stroke="#5d5de8" stroke-width=".3" stroke-linejoin="round"/>
<polygon points="177.92,144.27 175.75,150.58 185.1,151.88 187.26,145.57" fill="#7373ff" stroke="#7373ff" stroke-width=".3" stroke-linejoin="round"/>
<polygon points="262.82,254.93 256.04,255.78 256.02,265.58 262.8,264.73" fill="#9595ff" stroke="#9595ff" stroke-width=".3" stroke-linejoin="round"/>
<polygon points="266.1,285.74 266.8,291.96 276.19,293.3 275.49,287.08" fill="#7b7bff" stroke="#7b7bff" stroke-width=".3" stroke-linejoin="round"/>
<polygon points="256.04,255.78 248.79,255.45 248.78,265.25 256.02,265.58" fill="#8b8bff" stroke="#8b8bff" stroke-width=".3" stroke-linejoin="round"/>
<polygon points="281.34,269.76 278.46,273.49 287.86,274.82 290.74,271.1" fill="#5d5de8" stroke="#5d5de8" stroke-width=".3" stroke-linejoin="round"/>
<polygon points="269.08,272.15 266.93,278.49 276.32,279.83 278.46,273.49" fill="#7373ff" stroke="#7373ff" stroke-width=".3" stroke-linejoin="round"/>
<polygon points="175.75,150.58 174.92,157.84 184.27,159.14 185.1,151.88" fill="#7e7eff" stroke="#7e7eff" stroke-width=".3" stroke-linejoin="round"/>
<polygon points="248.81,245.64 243.04,244.22 243.03,254.02 248.79,255.45" fill="#7070ff" stroke="#7070ff" stroke-width=".3" stroke-linejoin="round"/>
<polygon points="211.77,144.44 208.89,144.49 218.25,145.78 221.12,145.73" fill="#4a4abc" stroke="#4a4abc" stroke-width=".3" stroke-linejoin="round"/>
<polygon points="194.35,166.69 196.44,170.27 205.79,171.57 203.71,168" fill="#6b6bff" stroke="#6b6bff" stroke-width=".3" stroke-linejoin="round"/>
<polygon points="266.93,278.49 266.1,285.74 275.49,287.08 276.32,279.83" fill="#7e7eff" stroke="#7e7eff" stroke-width=".3" stroke-linejoin="round"/>
<polygon points="243.07,224.59 240.34,222.47 240.32,232.27 243.06,234.41" fill="#4a4abc" stroke="#4a4abc" stroke-width=".3" stroke-linejoin="round"/>
<polygon points="267.36,233.51 262.85,235.31 262.84,245.12 267.34,243.31" fill="#8b8bff" stroke="#8b8bff" stroke-width=".3" stroke-linejoin="round"/>
<polygon points="302.97,272.32 300.13,272.43 309.54,273.77 312.37,273.65" fill="#4a4abc" stroke="#4a4abc" stroke-width=".3" stroke-linejoin="round"/>
<polygon points="268.41,211.62 267.39,213.88 267.38,223.7 268.39,221.43" fill="#6f6fff" stroke="#6f6fff" stroke-width=".3" stroke-linejoin="round"/>
<polygon points="184.27,159.14 185,165.39 194.35,166.69 193.62,160.44" fill="#7b7bff" stroke="#7b7bff" stroke-width=".3" stroke-linejoin="round"/>
<polygon points="262.84,245.12 256.05,245.97 256.04,255.78 262.82,254.93" fill="#9595ff" stroke="#9595ff" stroke-width=".3" stroke-linejoin="round"/>
<polygon points="285.58,294.64 287.63,298.16 297.02,299.5 294.98,295.99" fill="#6b6bff" stroke="#6b6bff" stroke-width=".3" stroke-linejoin="round"/>
<polygon points="199.53,143.19 196.62,146.86 205.97,148.16 208.89,144.49" fill="#5d5de8" stroke="#5d5de8" stroke-width=".3" stroke-linejoin="round"/>
<polygon points="187.26,145.57 185.1,151.88 194.45,153.18 196.62,146.86" fill="#7373ff" stroke="#7373ff" stroke-width=".3" stroke-linejoin="round"/>
<polygon points="256.05,245.97 248.81,245.64 248.79,255.45 256.04,255.78" fill="#8b8bff" stroke="#8b8bff" stroke-width=".3" stroke-linejoin="round"/>
<polygon points="275.49,287.08 276.19,293.3 285.58,294.64 284.88,288.42" fill="#7b7bff" stroke="#7b7bff" stroke-width=".3" stroke-linejoin="round"/>
<polygon points="248.82,235.83 243.06,234.41 243.04,244.22 248.81,245.64" fill="#7070ff" stroke="#7070ff" stroke-width=".3" stroke-linejoin="round"/>
<polygon points="290.74,271.1 287.86,274.82 297.26,276.16 300.13,272.43" fill="#5d5de8" stroke="#5d5de8" stroke-width=".3" stroke-linejoin="round"/>
<polygon points="278.46,273.49 276.32,279.83 285.72,281.17 287.86,274.82" fill="#7373ff" stroke="#7373ff" stroke-width=".3" stroke-linejoin="round"/>
<polygon points="185.1,151.88 184.27,159.14 193.62,160.44 194.45,153.18" fill="#7e7eff" stroke="#7e7eff" stroke-width=".3" stroke-linejoin="round"/>
<polygon points="221.12,145.73 218.25,145.78 227.61,147.08 230.48,147.03" fill="#4a4abc" stroke="#4a4abc" stroke-width=".3" stroke-linejoin="round"/>
<polygon points="243.08,214.77 240.35,212.65 240.34,222.47 243.07,224.59" fill="#4a4abc" stroke="#4a4abc" stroke-width=".3" stroke-linejoin="round"/>
<polygon points="267.38,223.7 262.87,225.49 262.85,235.31 267.36,233.51" fill="#8b8bff" stroke="#8b8bff" stroke-width=".3" stroke-linejoin="round"/>
<polygon points="268.43,201.8 267.41,204.06 267.39,213.88 268.41,211.62" fill="#6f6fff" stroke="#6f6fff" stroke-width=".3" stroke-linejoin="round"/>
<polygon points="203.71,168 205.79,171.57 215.15,172.87 213.07,169.3" fill="#6b6bff" stroke="#6b6bff" stroke-width=".3" stroke-linejoin="round"/>
<polygon points="276.32,279.83 275.49,287.08 284.88,288.42 285.72,281.17" fill="#7e7eff" stroke="#7e7eff" stroke-width=".3" stroke-linejoin="round"/>
<polygon points="262.85,235.31 256.07,236.16 256.05,245.97 262.84,245.12" fill="#9595ff" stroke="#9595ff" stroke-width=".3" stroke-linejoin="round"/>
<polygon points="312.37,273.65 309.54,273.77 318.95,275.11 321.77,274.99" fill="#4a4abc" stroke="#4a4abc" stroke-width=".3" stroke-linejoin="round"/>
<polygon points="193.62,160.44 194.35,166.69 203.71,168 202.98,161.74" fill="#7b7bff" stroke="#7b7bff" stroke-width=".3" stroke-linejoin="round"/>
<polygon points="256.07,236.16 248.82,235.83 248.81,245.64 256.05,245.97" fill="#8b8bff" stroke="#8b8bff" stroke-width=".3" stroke-linejoin="round"/>
<polygon points="294.98,295.99 297.02,299.5 306.43,300.85 304.39,297.33" fill="#6b6bff" stroke="#6b6bff" stroke-width=".3" stroke-linejoin="round"/>
<polygon points="208.89,144.49 205.97,148.16 215.34,149.46 218.25,145.78" fill="#5d5de8" stroke="#5d5de8" stroke-width=".3" stroke-linejoin="round"/>
<polygon points="248.84,226.01 243.07,224.59 243.06,234.41 248.82,235.83" fill="#7070ff" stroke="#7070ff" stroke-width=".3" stroke-linejoin="round"/>
<polygon points="196.62,146.86 194.45,153.18 203.81,154.48 205.97,148.16" fill="#7373ff" stroke="#7373ff" stroke-width=".3" stroke-linejoin="round"/>
<polygon points="284.88,288.42 285.58,294.64 294.98,295.99 294.29,289.77" fill="#7b7bff" stroke="#7b7bff" stroke-width=".3" stroke-linejoin="round"/>
<polygon points="300.13,272.43 297.26,276.16 306.67,277.5 309.54,273.77" fill="#5d5de8" stroke="#5d5de8" stroke-width=".3" stroke-linejoin="round"/>
<polygon points="243.1,204.95 240.36,202.83 240.35,212.65 243.08,214.77" fill="#4a4abc" stroke="#4a4abc" stroke-width=".3" stroke-linejoin="round"/>
<polygon points="267.39,213.88 262.89,215.67 262.87,225.49 267.38,223.7" fill="#8b8bff" stroke="#8b8bff" stroke-width=".3" stroke-linejoin="round"/>
<polygon points="287.86,274.82 285.72,281.17 295.12,282.51 297.26,276.16" fill="#7373ff" stroke="#7373ff" stroke-width=".3" stroke-linejoin="round"/>
<polygon points="268.45,191.98 267.43,194.23 267.41,204.06 268.43,201.8" fill="#6f6fff" stroke="#6f6fff" stroke-width=".3" stroke-linejoin="round"/>
<polygon points="194.45,153.18 193.62,160.44 202.98,161.74 203.81,154.48" fill="#7e7eff" stroke="#7e7eff" stroke-width=".3" stroke-linejoin="round"/>
<polygon points="230.48,147.03 227.61,147.08 236.98,148.38 239.85,148.33" fill="#4a4abc" stroke="#4a4abc" stroke-width=".3" stroke-linejoin="round"/>
<polygon points="262.87,225.49 256.09,226.34 256.07,236.16 262.85,235.31" fill="#9595ff" stroke="#9595ff" stroke-width=".3" stroke-linejoin="round"/>
<polygon points="213.07,169.3 215.15,172.87 224.51,174.18 222.43,170.6" fill="#6b6bff" stroke="#6b6bff" stroke-width=".3" stroke-linejoin="round"/>
<polygon points="285.72,281.17 284.88,288.42 294.29,289.77 295.12,282.51" fill="#7e7eff" stroke="#7e7eff" stroke-width=".3" stroke-linejoin="round"/>
<polygon points="256.09,226.34 248.84,226.01 248.82,235.83 256.07,236.16" fill="#8b8bff" stroke="#8b8bff" stroke-width=".3" stroke-linejoin="round"/>
<polygon points="321.77,274.99 318.95,275.11 328.36,276.45 331.18,276.33" fill="#4a4abc" stroke="#4a4abc" stroke-width=".3" stroke-linejoin="round"/>
<polygon points="248.85,216.19 243.08,214.77 243.07,224.59 248.84,226.01" fill="#7070ff" stroke="#7070ff" stroke-width=".3" stroke-linejoin="round"/>
<polygon points="202.98,161.74 203.71,168 213.07,169.3 212.34,163.04" fill="#7b7bff" stroke="#7b7bff" stroke-width=".3" stroke-linejoin="round"/>
<polygon points="304.39,297.33 306.43,300.85 315.83,302.2 313.8,298.68" fill="#6b6bff" stroke="#6b6bff" stroke-width=".3" stroke-linejoin="round"/>
<polygon points="218.25,145.78 215.34,149.46 224.71,150.76 227.61,147.08" fill="#5d5de8" stroke="#5d5de8" stroke-width=".3" stroke-linejoin="round"/>
<polygon points="205.97,148.16 203.81,154.48 213.18,155.78 215.34,149.46" fill="#7373ff" stroke="#7373ff" stroke-width=".3" stroke-linejoin="round"/>
<polygon points="243.11,195.12 240.37,193.01 240.36,202.83 243.1,204.95" fill="#4a4abc" stroke="#4a4abc" stroke-width=".3" stroke-linejoin="round"/>
<polygon points="267.41,204.06 262.91,205.85 262.89,215.67 267.39,213.88" fill="#8b8bff" stroke="#8b8bff" stroke-width=".3" stroke-linejoin="round"/>
<polygon points="294.29,289.77 294.98,295.99 304.39,297.33 303.69,291.11" fill="#7b7bff" stroke="#7b7bff" stroke-width=".3" stroke-linejoin="round"/>
<polygon points="268.47,182.15 267.45,184.4 267.43,194.23 268.45,191.98" fill="#6f6fff" stroke="#6f6fff" stroke-width=".3" stroke-linejoin="round"/>
<polygon points="309.54,273.77 306.67,277.5 316.08,278.84 318.95,275.11" fill="#5d5de8" stroke="#5d5de8" stroke-width=".3" stroke-linejoin="round"/>
<polygon points="262.89,215.67 256.1,216.52 256.09,226.34 262.87,225.49" fill="#9595ff" stroke="#9595ff" stroke-width=".3" stroke-linejoin="round"/>
<polygon points="297.26,276.16 295.12,282.51 304.53,283.85 306.67,277.5" fill="#7373ff" stroke="#7373ff" stroke-width=".3" stroke-linejoin="round"/>
<polygon points="203.81,154.48 202.98,161.74 212.34,163.04 213.18,155.78" fill="#7e7eff" stroke="#7e7eff" stroke-width=".3" stroke-linejoin="round"/>
<polygon points="239.85,148.33 236.98,148.38 248.66,152.41 250.81,152.12" fill="#4c4cc0" stroke="#4c4cc0" stroke-width=".3" stroke-linejoin="round"/>
<polygon points="256.1,216.52 248.85,216.19 248.84,226.01 256.09,226.34" fill="#8b8bff" stroke="#8b8bff" stroke-width=".3" stroke-linejoin="round"/>
<polygon points="222.43,170.6 224.51,174.18 233.88,175.48 231.81,171.91" fill="#6b6bff" stroke="#6b6bff" stroke-width=".3" stroke-linejoin="round"/>
<polygon points="248.87,206.36 243.1,204.95 243.08,214.77 248.85,216.19" fill="#7070ff" stroke="#7070ff" stroke-width=".3" stroke-linejoin="round"/>
<polygon points="295.12,282.51 294.29,289.77 303.69,291.11 304.53,283.85" fill="#7e7eff" stroke="#7e7eff" stroke-width=".3" stroke-linejoin="round"/>
<polygon points="212.34,163.04 213.07,169.3 222.43,170.6 221.71,164.34" fill="#7b7bff" stroke="#7b7bff" stroke-width=".3" stroke-linejoin="round"/>
<polygon points="243.12,185.29 240.39,183.18 240.37,193.01 243.11,195.12" fill="#4a4abc" stroke="#4a4abc" stroke-width=".3" stroke-linejoin="round"/>
<polygon points="267.43,194.23 262.93,196.02 262.91,205.85 267.41,204.06" fill="#8b8bff" stroke="#8b8bff" stroke-width=".3" stroke-linejoin="round"/>
<polygon points="313.8,298.68 315.83,302.2 325.25,303.54 323.22,300.03" fill="#6b6bff" stroke="#6b6bff" stroke-width=".3" stroke-linejoin="round"/>
<polygon points="266.31,170.43 265.15,171.91 267.45,184.4 268.47,182.15" fill="#6f6fff" stroke="#6f6fff" stroke-width=".3" stroke-linejoin="round"/>
<polygon points="227.61,147.08 224.71,150.76 234.08,152.06 236.98,148.38" fill="#5d5de8" stroke="#5d5de8" stroke-width=".3" stroke-linejoin="round"/>
<polygon points="215.34,149.46 213.18,155.78 222.55,157.08 224.71,150.76" fill="#7373ff" stroke="#7373ff" stroke-width=".3" stroke-linejoin="round"/>
<polygon points="262.91,205.85 256.12,206.69 256.1,216.52 262.89,215.67" fill="#9595ff" stroke="#9595ff" stroke-width=".3" stroke-linejoin="round"/>
<polygon points="303.69,291.11 304.39,297.33 313.8,298.68 313.11,292.46" fill="#7b7bff" stroke="#7b7bff" stroke-width=".3" stroke-linejoin="round"/>
<polygon points="250.81,152.12 248.66,152.41 258.55,160.68 260.11,159.88" fill="#5d5de8" stroke="#5d5de8" stroke-width=".3" stroke-linejoin="round"/>
<polygon points="231.81,171.91 233.88,175.48 236.37,176.35 236.14,173.41" fill="#6464f6" stroke="#6464f6" stroke-width=".3" stroke-linejoin="round"/>
<polygon points="318.95,275.11 316.08,278.84 325.5,280.18 328.36,276.45" fill="#5d5de8" stroke="#5d5de8" stroke-width=".3" stroke-linejoin="round"/>
<polygon points="256.12,206.69 248.87,206.36 248.85,216.19 256.1,216.52" fill="#8b8bff" stroke="#8b8bff" stroke-width=".3" stroke-linejoin="round"/>
<polygon points="306.67,277.5 304.53,283.85 313.94,285.19 316.08,278.84" fill="#7373ff" stroke="#7373ff" stroke-width=".3" stroke-linejoin="round"/>
<polygon points="213.18,155.78 212.34,163.04 221.71,164.34 222.55,157.08" fill="#7e7eff" stroke="#7e7eff" stroke-width=".3" stroke-linejoin="round"/>
<polygon points="260.11,159.88 258.55,160.68 265.15,171.91 266.31,170.43" fill="#6a6aff" stroke="#6a6aff" stroke-width=".3" stroke-linejoin="round"/>
<polygon points="242.27,180.65 239.89,180.51 240.39,183.18 243.12,185.29" fill="#4a4abd" stroke="#4a4abd" stroke-width=".3" stroke-linejoin="round"/>
<polygon points="248.88,196.53 243.11,195.12 243.1,204.95 248.87,206.36" fill="#7070ff" stroke="#7070ff" stroke-width=".3" stroke-linejoin="round"/>
<polygon points="236.14,173.41 236.37,176.35 238.48,178.11 239.82,176.48" fill="#5757da" stroke="#5757da" stroke-width=".3" stroke-linejoin="round"/>
<polygon points="239.82,176.48 238.48,178.11 239.89,180.51 242.27,180.65" fill="#4e4ec6" stroke="#4e4ec6" stroke-width=".3" stroke-linejoin="round"/>
<polygon points="304.53,283.85 303.69,291.11 313.11,292.46 313.94,285.19" fill="#7e7eff" stroke="#7e7eff" stroke-width=".3" stroke-linejoin="round"/>
<polygon points="267.45,184.4 262.95,186.18 262.93,196.02 267.43,194.23" fill="#8b8bff" stroke="#8b8bff" stroke-width=".3" stroke-linejoin="round"/>
<polygon points="221.71,164.34 222.43,170.6 231.81,171.91 231.09,165.65" fill="#7b7bff" stroke="#7b7bff" stroke-width=".3" stroke-linejoin="round"/>
<polygon points="262.93,196.02 256.14,196.86 256.12,206.69 262.91,205.85" fill="#9595ff" stroke="#9595ff" stroke-width=".3" stroke-linejoin="round"/>
<polygon points="236.98,148.38 234.08,152.06 245.14,155.88 248.66,152.41" fill="#6868ff" stroke="#6868ff" stroke-width=".3" stroke-linejoin="round"/>
<polygon points="224.71,150.76 222.55,157.08 231.92,158.38 234.08,152.06" fill="#7373ff" stroke="#7373ff" stroke-width=".3" stroke-linejoin="round"/>
<polygon points="256.14,196.86 248.88,196.53 248.87,206.36 256.12,206.69" fill="#8b8bff" stroke="#8b8bff" stroke-width=".3" stroke-linejoin="round"/>
<polygon points="313.11,292.46 313.8,298.68 323.22,300.03 322.53,293.8" fill="#7b7bff" stroke="#7b7bff" stroke-width=".3" stroke-linejoin="round"/>
<polygon points="248.89,186.7 243.12,185.29 243.11,195.12 248.88,196.53" fill="#7070ff" stroke="#7070ff" stroke-width=".3" stroke-linejoin="round"/>
<polygon points="316.08,278.84 313.94,285.19 323.36,286.54 325.5,280.18" fill="#7373ff" stroke="#7373ff" stroke-width=".3" stroke-linejoin="round"/>
<polygon points="222.55,157.08 221.71,164.34 231.09,165.65 231.92,158.38" fill="#7e7eff" stroke="#7e7eff" stroke-width=".3" stroke-linejoin="round"/>
<polygon points="265.15,171.91 260.77,174.36 262.95,186.18 267.45,184.4" fill="#8b8bff" stroke="#8b8bff" stroke-width=".3" stroke-linejoin="round"/>
<polygon points="231.09,165.65 231.81,171.91 236.14,173.41 237.91,168.01" fill="#7979ff" stroke="#7979ff" stroke-width=".3" stroke-linejoin="round"/>
<polygon points="313.94,285.19 313.11,292.46 322.53,293.8 323.36,286.54" fill="#7e7eff" stroke="#7e7eff" stroke-width=".3" stroke-linejoin="round"/>
<polygon points="262.95,186.18 256.15,187.02 256.14,196.86 262.93,196.02" fill="#9595ff" stroke="#9595ff" stroke-width=".3" stroke-linejoin="round"/>
<polygon points="248.66,152.41 245.14,155.88 254.51,163.71 258.55,160.68" fill="#7979ff" stroke="#7979ff" stroke-width=".3" stroke-linejoin="round"/>
<polygon points="247.55,179.4 242.27,180.65 243.12,185.29 248.89,186.7" fill="#7070ff" stroke="#7070ff" stroke-width=".3" stroke-linejoin="round"/>
<polygon points="256.15,187.02 248.89,186.7 248.88,196.53 256.14,196.86" fill="#8b8bff" stroke="#8b8bff" stroke-width=".3" stroke-linejoin="round"/>
<polygon points="258.55,160.68 254.51,163.71 260.77,174.36 265.15,171.91" fill="#8686ff" stroke="#8686ff" stroke-width=".3" stroke-linejoin="round"/>
<polygon points="237.91,168.01 236.14,173.41 239.82,176.48 243.69,172.84" fill="#7474ff" stroke="#7474ff" stroke-width=".3" stroke-linejoin="round"/>
<polygon points="234.08,152.06 231.92,158.38 241.2,161.59 245.14,155.88" fill="#7b7bff" stroke="#7b7bff" stroke-width=".3" stroke-linejoin="round"/>
<polygon points="243.69,172.84 239.82,176.48 242.27,180.65 247.55,179.4" fill="#7171ff" stroke="#7171ff" stroke-width=".3" stroke-linejoin="round"/>
<polygon points="231.92,158.38 231.09,165.65 237.91,168.01 241.2,161.59" fill="#8181ff" stroke="#8181ff" stroke-width=".3" stroke-linejoin="round"/>
<polygon points="260.77,174.36 254.32,177.1 256.15,187.02 262.95,186.18" fill="#9595ff" stroke="#9595ff" stroke-width=".3" stroke-linejoin="round"/>
<polygon points="254.32,177.1 247.55,179.4 248.89,186.7 256.15,187.02" fill="#8b8bff" stroke="#8b8bff" stroke-width=".3" stroke-linejoin="round"/>
<polygon points="245.14,155.88 241.2,161.59 249.07,168.16 254.51,163.71" fill="#8888ff" stroke="#8888ff" stroke-width=".3" stroke-linejoin="round"/>
<polygon points="241.2,161.59 237.91,168.01 243.69,172.84 249.07,168.16" fill="#8686ff" stroke="#8686ff" stroke-width=".3" stroke-linejoin="round"/>
<polygon points="254.51,163.71 249.07,168.16 254.32,177.1 260.77,174.36" fill="#9191ff" stroke="#9191ff" stroke-width=".3" stroke-linejoin="round"/>
<polygon points="249.07,168.16 243.69,172.84 247.55,179.4 254.32,177.1" fill="#8a8aff" stroke="#8a8aff" stroke-width=".3" stroke-linejoin="round"/>
<path d="M53.27 237.31L56.2 237.22L65.45 238.53M62.52 238.63L65.45 238.53L74.7 239.85M50.22 264.16L48.08 260.66L57.33 261.98M50.31 241L53.27 237.31L62.52 238.63M71.77 239.95L74.7 239.85L83.96 241.16M59.46 265.49L57.33 261.98L66.58 263.31M48.08 260.66L47.31 254.48L56.57 255.8M59.56 242.31L62.52 238.63L71.77 239.95M48.13 247.28L50.31 241L59.56 242.31M47.31 254.48L48.13 247.28L57.39 248.6M81.03 241.26L83.96 241.16L93.22 242.48M68.72 266.81L66.58 263.31L75.85 264.63M57.33 261.98L56.57 255.8L65.83 257.13M68.82 243.63L71.77 239.95L81.03 241.26M57.39 248.6L59.56 242.31L68.82 243.63M56.57 255.8L57.39 248.6L66.65 249.92M90.3 242.58L93.22 242.48L102.49 243.8M77.98 268.14L75.85 264.63L85.12 265.96M66.58 263.31L65.83 257.13L75.09 258.45M78.09 244.95L81.03 241.26L90.3 242.58M66.65 249.92L68.82 243.63L78.09 244.95M65.83 257.13L66.65 249.92L75.91 251.24M99.57 243.9L102.49 243.8L111.77 245.12M87.24 269.46L85.12 265.96L94.39 267.29M75.85 264.63L75.09 258.45L84.36 259.77M87.36 246.27L90.3 242.58L99.57 243.9M75.91 251.24L78.09 244.95L87.36 246.27M108.7 272L105.79 272.12L116.63 271.42M75.09 258.45L75.91 251.24L85.18 252.57M96.51 270.79L94.39 267.29L103.67 268.62M85.12 265.96L84.36 259.77L93.64 261.1M96.63 247.59L99.57 243.9L108.85 245.22M85.18 252.57L87.36 246.27L96.63 247.59M84.36 259.77L85.18 252.57L94.46 253.89M105.91 248.91L108.85 245.22L110.62 245.1M120.23 271.26L116.63 271.42L125.81 266.33M105.79 272.12L103.67 268.62L112.69 268.03M94.39 267.29L93.64 261.1L102.92 262.43M108.29 248.76L110.62 245.1L112.12 244.27M94.46 253.89L96.63 247.59L105.91 248.91M110.31 247.64L112.12 244.27L113.11 242.85M93.64 261.1L94.46 253.89L103.74 255.21M103.74 255.21L105.91 248.91L108.29 248.76M103.67 268.62L102.92 262.43L109.49 262M116.63 271.42L112.69 268.03L120.34 263.79M137.99 253.68L136.54 256.56L138.82 244.83M107.88 254.94L108.29 248.76L110.31 247.64M102.92 262.43L103.74 255.21L107.88 254.94M130.01 265.84L125.81 266.33L131.95 257.6M111.39 253L110.31 247.64L111.65 245.72M112.69 268.03L109.49 262L115.06 258.91M109.49 262L107.88 254.94L111.39 253M113.72 249.66L111.65 245.72L112.12 243.3M140.15 242.57L138.82 244.83L138.81 235.07M125.81 266.33L120.34 263.79L125.45 256.52M136.54 256.56L131.95 257.6L134.1 246.57M114.54 245.46L112.12 243.3L112.1 233.55M115.06 258.91L111.39 253L113.72 249.66M140.14 232.82L138.81 235.07L138.8 225.3M120.34 263.79L115.06 258.91L118.77 253.62M118.77 253.62L113.72 249.66L114.54 245.46M114.52 235.7L112.1 233.55L112.08 223.78M138.82 244.83L134.1 246.57L134.08 236.81M131.95 257.6L125.45 256.52L127.23 247.35M140.13 223.06L138.8 225.3L138.79 215.53M125.45 256.52L118.77 253.62L120.07 246.94M120.07 246.94L114.54 245.46L114.52 235.7M114.5 225.93L112.08 223.78L112.06 214.02M138.81 235.07L134.08 236.81L134.07 227.04M140.11 213.29L138.79 215.53L138.77 205.76M134.1 246.57L127.23 247.35L127.21 237.58M127.23 247.35L120.07 246.94L120.05 237.17M120.05 237.17L114.52 235.7L114.5 225.93M114.48 216.16L112.06 214.02L112.05 204.25M138.8 225.3L134.07 227.04L134.05 217.27M140.1 203.52L138.77 205.76L138.76 195.98M134.08 236.81L127.21 237.58L127.2 227.81M127.21 237.58L120.05 237.17L120.03 227.4M120.03 227.4L114.5 225.93L114.48 216.16M114.46 206.38L112.05 204.25L112.03 194.47M138.79 215.53L134.05 217.27L134.04 207.49M140.09 193.75L138.76 195.98L138.75 186.19M134.07 227.04L127.2 227.81L127.18 218.04M127.2 227.81L120.03 227.4L120.02 217.63M120.02 217.63L114.48 216.16L114.46 206.38M114.45 196.6L112.03 194.47L112.01 184.69M138.77 205.76L134.04 207.49L134.03 197.71M140.08 183.97L138.75 186.19L138.73 176.4M134.05 217.27L127.18 218.04L127.17 208.26M127.18 218.04L120.02 217.63L120 207.85M120 207.85L114.46 206.38L114.45 196.6M114.43 186.82L112.01 184.69L111.99 174.9M138.76 195.98L134.03 197.71L134.01 187.92M140.06 174.19L138.73 176.4L138.72 166.61M134.04 207.49L127.17 208.26L127.15 198.47M127.17 208.26L120 207.85L119.98 198.07M119.98 198.07L114.45 196.6L114.43 186.82M114.41 177.03L111.99 174.9L111.97 165.11M140.05 164.4L138.72 166.61L139.07 164.8M138.75 186.19L134.01 187.92L134 178.13M134.03 197.71L127.15 198.47L127.13 188.68M127.15 198.47L119.98 198.07L119.96 188.28M119.96 188.28L114.43 186.82L114.41 177.03M114.12 153.95L115.59 151.11L122.13 141.75M114.39 167.23L111.97 165.11L114.12 153.95M138.73 176.4L134 178.13L133.98 168.33M134.01 187.92L127.13 188.68L127.12 178.89M127.13 188.68L119.96 188.28L119.95 178.49M119.95 178.49L114.41 177.03L114.39 167.23M138.72 166.61L133.98 168.33L134.47 165.81M139.07 164.8L134.47 165.81L135.87 163.81M134 178.13L127.12 178.89L127.1 169.09M140.08 163.37L135.87 163.81L137.97 162.64M127.12 178.89L119.95 178.49L119.93 168.69M116.2 157.86L114.12 153.95L120.32 145.08M119.93 168.69L114.39 167.23L116.2 157.86M120.32 145.08L122.13 141.75L131.94 136.25M141.58 162.53L137.97 162.64L140.45 162.47M133.98 168.33L127.1 169.09L127.95 164.71M127.1 169.09L119.93 168.69L121.26 161.8M134.47 165.81L127.95 164.71L130.38 161.23M121.26 161.8L116.2 157.86L121.4 150.41M143.53 135.44L146.44 135.4L155.75 136.68M135.87 163.81L130.38 161.23L134.03 159.19M127.95 164.71L121.26 161.8L125.09 156.33M121.4 150.41L120.32 145.08L129.61 139.86M129.61 139.86L131.94 136.25L143.53 135.44M137.97 162.64L134.03 159.19L138.34 158.89M130.38 161.23L125.09 156.33L130.82 153.11M125.09 156.33L121.4 150.41L129.2 146.04M152.85 136.73L155.75 136.68L165.07 137.98M140.45 162.47L138.34 158.89L147.66 160.19M129.2 146.04L129.61 139.86L140.59 139.1M140.59 139.1L143.53 135.44L152.85 136.73M134.03 159.19L130.82 153.11L137.6 152.65M130.82 153.11L129.2 146.04L138.42 145.4M162.17 138.02L165.07 137.98L174.4 139.27M149.76 163.76L147.66 160.19L156.98 161.49M138.34 158.89L137.6 152.65L146.92 153.94M149.92 140.39L152.85 136.73L162.17 138.02M138.42 145.4L140.59 139.1L149.92 140.39M137.6 152.65L138.42 145.4L147.75 146.69M171.5 139.31L174.4 139.27L183.73 140.56M159.09 165.06L156.98 161.49L166.32 162.79M147.66 160.19L146.92 153.94L156.25 155.24M267.65 264.82L268.8 263.29L270.2 265.68M159.24 141.69L162.17 138.02L171.5 139.31M268.66 266.54L270.2 265.68L272.31 267.44M267.3 262.91L268.31 260.63L268.8 263.29M147.75 146.69L149.92 140.39L159.24 141.69M270.17 267.8L272.31 267.44L274.8 268.31M242.45 273.35L244.82 273.54L249.97 282.3M248.63 283.88L249.97 282.3L257.69 288.77M146.92 153.94L147.75 146.69L157.08 147.99M180.84 140.6L183.73 140.56L193.07 141.85M267.32 253.12L268.33 250.84L268.31 260.63M240.29 261.67L243.02 263.82L244.82 273.54M168.42 166.36L166.32 162.79L175.66 164.09M271.96 268.43L274.8 268.31L284.18 269.65M156.98 161.49L156.25 155.24L165.58 156.54M257.9 291.64L257.69 288.77L266.8 291.96M168.58 142.98L171.5 139.31L180.84 140.6M157.08 147.99L159.24 141.69L168.58 142.98M240.3 251.88L243.03 254.02L243.02 263.82M267.34 243.31L268.35 241.04L268.33 250.84M156.25 155.24L157.08 147.99L166.41 149.29M190.18 141.9L193.07 141.85L202.42 143.14M263.27 267.29L267.65 264.82L268.66 266.54M264.63 269.6L268.66 266.54L270.17 267.8M262.8 264.73L267.3 262.91L267.65 264.82M177.75 167.66L175.66 164.09L185 165.39M244.82 273.54L250.09 272.33L253.84 278.71M266.67 271.31L270.17 267.8L271.96 268.43M281.34 269.76L284.18 269.65L293.57 270.98M249.97 282.3L253.84 278.71L259.46 283.42M166.32 162.79L165.58 156.54L174.92 157.84M268.86 295.47L266.8 291.96L276.19 293.3M243.02 263.82L248.78 265.25L250.09 272.33M177.92 144.27L180.84 140.6L190.18 141.9M166.41 149.29L168.58 142.98L177.92 144.27M240.31 242.08L243.04 244.22L243.03 254.02M262.82 254.93L267.32 253.12L267.3 262.91M267.36 233.51L268.37 231.24L268.35 241.04M269.08 272.15L271.96 268.43L281.34 269.76M257.69 288.77L259.46 283.42L266.1 285.74M165.58 156.54L166.41 149.29L175.75 150.58M256.84 270.04L263.27 267.29L264.63 269.6M199.53 143.19L202.42 143.14L211.77 144.44M250.09 272.33L256.84 270.04L259.21 274.06M259.21 274.06L264.63 269.6L266.67 271.31M256.02 265.58L262.8 264.73L263.27 267.29M253.84 278.71L259.21 274.06L262.75 277.03M243.03 254.02L248.79 255.45L248.78 265.25M187.09 168.96L185 165.39L194.35 166.69M248.78 265.25L256.02 265.58L256.84 270.04M262.75 277.03L266.67 271.31L269.08 272.15M290.74 271.1L293.57 270.98L302.97 272.32M175.66 164.09L174.92 157.84L184.27 159.14M240.32 232.27L243.06 234.41L243.04 244.22M262.84 245.12L267.34 243.31L267.32 253.12M278.24 296.81L276.19 293.3L285.58 294.64M259.46 283.42L262.75 277.03L266.93 278.49M267.38 223.7L268.39 221.43L268.37 231.24M187.26 145.57L190.18 141.9L199.53 143.19M175.75 150.58L177.92 144.27L187.26 145.57M256.04 255.78L262.82 254.93L262.8 264.73M266.8 291.96L266.1 285.74L275.49 287.08M248.79 255.45L256.04 255.78L256.02 265.58M278.46 273.49L281.34 269.76L290.74 271.1M266.93 278.49L269.08 272.15L278.46 273.49M174.92 157.84L175.75 150.58L185.1 151.88M243.04 244.22L248.81 245.64L248.79 255.45M208.89 144.49L211.77 144.44L221.12 145.73M196.44 170.27L194.35 166.69L203.71 168M266.1 285.74L266.93 278.49L276.32 279.83M240.34 222.47L243.07 224.59L243.06 234.41M262.85 235.31L267.36 233.51L267.34 243.31M300.13 272.43L302.97 272.32L312.37 273.65M267.39 213.88L268.41 211.62L268.39 221.43M185 165.39L184.27 159.14L193.62 160.44M256.05 245.97L262.84 245.12L262.82 254.93M287.63 298.16L285.58 294.64L294.98 295.99M196.62 146.86L199.53 143.19L208.89 144.49M185.1 151.88L187.26 145.57L196.62 146.86M248.81 245.64L256.05 245.97L256.04 255.78M276.19 293.3L275.49 287.08L284.88 288.42M243.06 234.41L248.82 235.83L248.81 245.64M287.86 274.82L290.74 271.1L300.13 272.43M276.32 279.83L278.46 273.49L287.86 274.82M184.27 159.14L185.1 151.88L194.45 153.18M218.25 145.78L221.12 145.73L230.48 147.03M240.35 212.65L243.08 214.77L243.07 224.59M262.87 225.49L267.38 223.7L267.36 233.51M267.41 204.06L268.43 201.8L268.41 211.62M205.79 171.57L203.71 168L213.07 169.3M275.49 287.08L276.32 279.83L285.72 281.17M256.07 236.16L262.85 235.31L262.84 245.12M309.54 273.77L312.37 273.65L321.77 274.99M194.35 166.69L193.62 160.44L202.98 161.74M248.82 235.83L256.07 236.16L256.05 245.97M297.02 299.5L294.98 295.99L304.39 297.33M205.97 148.16L208.89 144.49L218.25 145.78M243.07 224.59L248.84 226.01L248.82 235.83M194.45 153.18L196.62 146.86L205.97 148.16M285.58 294.64L284.88 288.42L294.29 289.77M297.26 276.16L300.13 272.43L309.54 273.77M240.36 202.83L243.1 204.95L243.08 214.77M262.89 215.67L267.39 213.88L267.38 223.7M285.72 281.17L287.86 274.82L297.26 276.16M267.43 194.23L268.45 191.98L268.43 201.8M193.62 160.44L194.45 153.18L203.81 154.48M227.61 147.08L230.48 147.03L239.85 148.33M256.09 226.34L262.87 225.49L262.85 235.31M215.15 172.87L213.07 169.3L222.43 170.6M284.88 288.42L285.72 281.17L295.12 282.51M248.84 226.01L256.09 226.34L256.07 236.16M318.95 275.11L321.77 274.99L331.18 276.33M243.08 214.77L248.85 216.19L248.84 226.01M203.71 168L202.98 161.74L212.34 163.04M306.43 300.85L304.39 297.33L313.8 298.68M215.34 149.46L218.25 145.78L227.61 147.08M203.81 154.48L205.97 148.16L215.34 149.46M240.37 193.01L243.11 195.12L243.1 204.95M262.91 205.85L267.41 204.06L267.39 213.88M294.98 295.99L294.29 289.77L303.69 291.11M267.45 184.4L268.47 182.15L268.45 191.98M306.67 277.5L309.54 273.77L318.95 275.11M256.1 216.52L262.89 215.67L262.87 225.49M295.12 282.51L297.26 276.16L306.67 277.5M202.98 161.74L203.81 154.48L213.18 155.78M236.98 148.38L239.85 148.33L250.81 152.12M248.85 216.19L256.1 216.52L256.09 226.34M224.51 174.18L222.43 170.6L231.81 171.91M243.1 204.95L248.87 206.36L248.85 216.19M294.29 289.77L295.12 282.51L304.53 283.85M213.07 169.3L212.34 163.04L221.71 164.34M240.39 183.18L243.12 185.29L243.11 195.12M262.93 196.02L267.43 194.23L267.41 204.06M315.83 302.2L313.8 298.68L323.22 300.03M265.15 171.91L266.31 170.43L268.47 182.15M224.71 150.76L227.61 147.08L236.98 148.38M213.18 155.78L215.34 149.46L224.71 150.76M256.12 206.69L262.91 205.85L262.89 215.67M304.39 297.33L303.69 291.11L313.11 292.46M248.66 152.41L250.81 152.12L260.11 159.88M233.88 175.48L231.81 171.91L236.14 173.41M316.08 278.84L318.95 275.11L328.36 276.45M248.87 206.36L256.12 206.69L256.1 216.52M304.53 283.85L306.67 277.5L316.08 278.84M212.34 163.04L213.18 155.78L222.55 157.08M258.55 160.68L260.11 159.88L266.31 170.43M239.89 180.51L242.27 180.65L243.12 185.29M243.11 195.12L248.88 196.53L248.87 206.36M236.37 176.35L236.14 173.41L239.82 176.48M238.48 178.11L239.82 176.48L242.27 180.65M303.69 291.11L304.53 283.85L313.94 285.19M262.95 186.18L267.45 184.4L267.43 194.23M222.43 170.6L221.71 164.34L231.09 165.65M256.14 196.86L262.93 196.02L262.91 205.85M234.08 152.06L236.98 148.38L248.66 152.41M222.55 157.08L224.71 150.76L234.08 152.06M248.88 196.53L256.14 196.86L256.12 206.69M313.8 298.68L313.11 292.46L322.53 293.8M243.12 185.29L248.89 186.7L248.88 196.53M313.94 285.19L316.08 278.84L325.5 280.18M221.71 164.34L222.55 157.08L231.92 158.38M260.77 174.36L265.15 171.91L267.45 184.4M231.81 171.91L231.09 165.65L237.91 168.01M313.11 292.46L313.94 285.19L323.36 286.54M256.15 187.02L262.95 186.18L262.93 196.02M245.14 155.88L248.66 152.41L258.55 160.68M242.27 180.65L247.55 179.4L248.89 186.7M248.89 186.7L256.15 187.02L256.14 196.86M254.51 163.71L258.55 160.68L265.15 171.91M236.14 173.41L237.91 168.01L243.69 172.84M231.92 158.38L234.08 152.06L245.14 155.88M239.82 176.48L243.69 172.84L247.55 179.4M231.09 165.65L231.92 158.38L241.2 161.59M254.32 177.1L260.77 174.36L262.95 186.18M247.55 179.4L254.32 177.1L256.15 187.02M241.2 161.59L245.14 155.88L254.51 163.71M237.91 168.01L241.2 161.59L249.07 168.16M249.07 168.16L254.51 163.71L260.77 174.36M243.69 172.84L249.07 168.16L254.32 177.1" stroke="#b4b4f4" stroke-width=".3" fill="none" opacity=".4"/>
<path d="M108.85 245.22L105.91 248.91L103.74 255.21L102.92 262.43L103.67 268.62L105.79 272.12M112.12 243.3L114.54 245.46L120.07 246.94L127.23 247.35L134.1 246.57L138.82 244.83M111.97 165.11L114.39 167.23L119.93 168.69L127.1 169.09L133.98 168.33L138.72 166.61M143.53 135.44L140.59 139.1L138.42 145.4L137.6 152.65L138.34 158.89L140.45 162.47M190.18 141.9L187.26 145.57L185.1 151.88L184.27 159.14L185 165.39L187.09 168.96M236.98 148.38L234.08 152.06L231.92 158.38L231.09 165.65L231.81 171.91L233.88 175.48M267.45 184.4L262.95 186.18L256.15 187.02L248.89 186.7L243.12 185.29L240.39 183.18M267.3 262.91L262.8 264.73L256.02 265.58L248.78 265.25L243.02 263.82L240.29 261.67M271.96 268.43L269.08 272.15L266.93 278.49L266.1 285.74L266.8 291.96L268.86 295.47M102.92 262.66L109.58 262.23L115.21 259.1L118.98 253.74L120.29 246.97M248.55 265.22L249.88 272.39L253.68 278.86L259.37 283.62L266.1 285.97M267.33 185.67V259.15" stroke="#20204c" stroke-width=".5" stroke-dasharray="1 1" fill="none" opacity=".85"/>
<polygon points="333.21,279.86 331.18,276.33 328.36,276.45 325.5,280.18 323.36,286.54 322.53,293.8 323.22,300.03 325.25,303.54 328.07,303.41 330.93,299.67 333.06,293.33 333.89,286.08" fill="#f01cf0"/>
<path d="M328.22 289.93L333.21 279.86M328.22 289.93L331.18 276.33M328.22 289.93L328.36 276.45M328.22 289.93L325.5 280.18M328.22 289.93L323.36 286.54M328.22 289.93L322.53 293.8M328.22 289.93L323.22 300.03M328.22 289.93L325.25 303.54M328.22 289.93L328.07 303.41M328.22 289.93L330.93 299.67M328.22 289.93L333.06 293.33M328.22 289.93L333.89 286.08" stroke="#f890f8" stroke-width=".3" fill="none"/>
<g opacity="1"><polygon points="324.38,292.89 333.02,294.12 333.01,298.69 324.37,297.46" fill="#38e038"/><polygon points="333.02,294.12 340.67,288.6 340.66,293.16 333.01,298.69" fill="#5af25a"/><polygon points="324.38,292.89 333.02,294.12 340.67,288.6 332.04,287.37" fill="#40ee40"/></g>
<clipPath id="capc"><polygon points="333.21,279.86 331.18,276.33 328.36,276.45 325.5,280.18 323.36,286.54 322.53,293.8 323.22,300.03 325.25,303.54 328.07,303.41 330.93,299.67 333.06,293.33 333.89,286.08"/></clipPath>
<g clip-path="url(#capc)"><g style="filter:saturate(.22) brightness(.66)"><g opacity="1"><polygon points="324.38,292.89 333.02,294.12 333.01,298.69 324.37,297.46" fill="#38e038"/><polygon points="333.02,294.12 340.67,288.6 340.66,293.16 333.01,298.69" fill="#5af25a"/><polygon points="324.38,292.89 333.02,294.12 340.67,288.6 332.04,287.37" fill="#40ee40"/></g></g></g>
<polygon points="121.9,311.3 129.9,304.7 139.8,304.7 147.7,308.4 139.8,314" fill="#38e238"/><polygon points="129.3,305.2 129.9,304.7 139.8,304.7 147.7,308.4 145.3,310 137.8,307.6" fill="#72f572"/><circle cx="134.8" cy="300" r="4.8" fill="#3cf03c"/>
<rect x="130.2" y="181" width="4.28" height="115.2" fill="#6a6af0"/><rect x="134.47" y="181" width="5.22" height="115.2" fill="#5c5ce0"/>
<polygon points="195.4,322.3 203.4,315.7 213.3,315.7 221.2,319.4 213.3,325" fill="#38e238"/><polygon points="202.8,316.2 203.4,315.7 213.3,315.7 221.2,319.4 218.8,321 211.3,318.6" fill="#72f572"/><circle cx="208.3" cy="311" r="4.8" fill="#3cf03c"/>
<rect x="203.2" y="193.5" width="4.41" height="113.9" fill="#6a6af0"/><rect x="207.61" y="193.5" width="5.39" height="113.9" fill="#5c5ce0"/>
<clipPath id="pf"><rect x="100" y="150" width="47.5" height="60"/></clipPath><g clip-path="url(#pf)"><polygon points="123.68,181.64 212.31,194.05 252.78,166.08 164.62,153.83" fill="#7d7d7d"/><path d="M131.07 182.68L171.97 154.85M127.1 179.32L215.69 191.72M138.46 183.71L179.31 155.87M130.51 177.01L219.06 189.39M145.84 184.74L186.66 156.89M133.92 174.69L222.43 187.06M153.23 185.78L194.01 157.91M137.33 172.37L225.8 184.73M160.61 186.81L201.35 158.93M140.74 170.05L229.18 182.4M168 187.85L208.7 159.95M144.15 167.73L232.55 180.07M175.39 188.88L216.05 160.97M147.56 165.42L235.92 177.73M182.77 189.92L223.39 161.99M150.98 163.1L239.29 175.4M190.16 190.95L230.74 163.01M154.39 160.78L242.66 173.07M197.54 191.99L238.09 164.04M157.8 158.46L246.04 170.74M204.93 193.02L245.43 165.06M161.21 156.15L249.41 168.41" stroke="#959595" stroke-width=".3" fill="none"/></g>
<polygon points="184.2,166.5 184.2,178.3 195.4,169.6" fill="#7272f4"/>
<path d="M184.2 159.4C184.2 164 184.4 167.4 186 168.3C187 168.8 188 168.6 189.2 168.2" stroke="#34348c" stroke-width=".5" fill="none" opacity=".8"/>
<path d="M134.5 296L145.4 297" stroke="#e02020" stroke-width=".8"/><path d="M134.5 296V281" stroke="#2020d0" stroke-width=".8"/><path d="M134.5 296L139 292.4" stroke="#20b020" stroke-width=".8"/><circle cx="134.6" cy="286" r=".9" fill="#1414b4"/><circle cx="143.8" cy="296.9" r=".85" fill="#b81414"/>
<circle cx="123.68" cy="181.64" r=".55" fill="#c03050"/>
<circle cx="212.31" cy="194.05" r=".55" fill="#c03050"/>
<circle cx="168.7" cy="157" r=".55" fill="#c03050"/>
<circle cx="184.2" cy="159.4" r=".55" fill="#c03050"/>
<circle cx="184.2" cy="178.3" r=".55" fill="#c03050"/>
</g>
<g opacity=".99"><path d="M19.9 357.4V346.8" stroke="#3030e0" stroke-width=".9"/><path d="M19.9 357.4L24.2 354.2" stroke="#20c020" stroke-width=".8"/><path d="M19.9 357.4L30 358.7" stroke="#e02020" stroke-width=".8"/><text x="19.9" y="345.2" font-family="Liberation Sans,sans-serif" font-size="3" fill="#4040e0" text-anchor="middle">Z</text><text x="26.2" y="354.2" font-family="Liberation Sans,sans-serif" font-size="3" fill="#20c020" text-anchor="middle">Y</text><text x="33" y="360.4" font-family="Liberation Sans,sans-serif" font-size="3" fill="#e02020" text-anchor="middle">X</text><circle cx="19.9" cy="347.8" r=".75" fill="#1818b0"/><circle cx="29" cy="358.5" r=".7" fill="#b01010"/><circle cx="23.7" cy="354.6" r=".6" fill="#10a010"/></g>
<clipPath id="cr"><rect x="382.6" y="39.5" width="374.4" height="366.8"/></clipPath>
<g clip-path="url(#cr)">
<path d="M438.34 240.73L436.2 237.22L433.27 237.31L430.31 241L428.13 247.28L427.31 254.48L428.08 260.66L430.22 264.16L433.15 264.05L436.11 260.36L438.28 254.09L439.1 246.9ZM447.58 242.04L445.45 238.53L442.52 238.63L439.56 242.31L437.39 248.6L436.57 255.8L437.33 261.98L439.46 265.49L442.4 265.38L445.35 261.68L447.52 255.4L448.34 248.22ZM456.83 243.36L454.7 239.85L451.77 239.95L448.82 243.63L446.65 249.92L445.83 257.13L446.58 263.31L448.72 266.81L451.65 266.7L454.59 263.01L456.76 256.73L457.58 249.53ZM466.08 244.68L463.96 241.16L461.03 241.26L458.09 244.95L455.91 251.24L455.09 258.45L455.85 264.63L457.98 268.14L460.9 268.02L463.84 264.33L466.01 258.05L466.83 250.85ZM475.34 245.99L473.22 242.48L470.3 242.58L467.36 246.27L465.18 252.57L464.36 259.77L465.12 265.96L467.24 269.46L470.16 269.35L473.1 265.65L475.27 259.37L476.09 252.17ZM484.61 247.31L482.49 243.8L479.57 243.9L476.63 247.59L474.46 253.89L473.64 261.1L474.39 267.29L476.51 270.79L479.43 270.68L482.37 266.98L484.53 260.69L485.35 253.49ZM493.88 248.63L491.77 245.12L488.85 245.22L485.91 248.91L483.74 255.21L482.92 262.43L483.67 268.62L485.79 272.12L488.7 272L491.64 268.3L493.8 262.01L494.62 254.82ZM498.16 248.35L494.23 244.96L490.62 245.1L488.29 248.76L487.88 254.94L489.49 262L492.69 268.03L496.63 271.42L500.23 271.26L502.55 267.6L502.96 261.42L501.35 254.38ZM501.78 246.34L496.32 243.8L492.12 244.27L490.31 247.64L491.39 253L495.06 258.91L500.34 263.79L505.81 266.33L510.01 265.84L511.81 262.47L510.72 257.11L507.06 251.21ZM504.2 242.89L497.71 241.81L493.11 242.85L491.65 245.72L493.72 249.66L498.77 253.62L505.45 256.52L511.95 257.6L516.54 256.56L517.99 253.68L515.91 249.74L510.86 245.79ZM505.05 238.54L498.19 239.31L493.46 241.05L492.12 243.3L494.54 245.46L500.07 246.94L507.23 247.35L514.1 246.57L518.82 244.83L520.15 242.57L517.72 240.42L512.19 238.95ZM505.03 228.79L498.18 229.56L493.44 231.3L492.1 233.55L494.52 235.7L500.05 237.17L507.21 237.58L514.08 236.81L518.81 235.07L520.14 232.82L517.71 230.67L512.18 229.2ZM505.02 219.04L498.16 219.81L493.42 221.54L492.08 223.78L494.5 225.93L500.03 227.4L507.2 227.81L514.07 227.04L518.8 225.3L520.13 223.06L517.7 220.92L512.17 219.45ZM505 209.28L498.14 210.05L493.4 211.78L492.06 214.02L494.48 216.16L500.02 217.63L507.18 218.04L514.05 217.27L518.79 215.53L520.11 213.29L517.68 211.16L512.15 209.69ZM504.98 199.52L498.12 200.29L493.39 202.01L492.05 204.25L494.46 206.38L500 207.85L507.17 208.26L514.04 207.49L518.77 205.76L520.1 203.52L517.67 201.39L512.14 199.93ZM504.97 189.76L498.1 190.52L493.37 192.24L492.03 194.47L494.45 196.6L499.98 198.07L507.15 198.47L514.03 197.71L518.76 195.98L520.09 193.75L517.66 191.62L512.12 190.16ZM504.95 179.98L498.09 180.75L493.35 182.47L492.01 184.69L494.43 186.82L499.96 188.28L507.13 188.68L514.01 187.92L518.75 186.19L520.08 183.97L517.64 181.84L512.11 180.39ZM504.93 170.21L498.07 170.97L493.33 172.68L491.99 174.9L494.41 177.03L499.95 178.49L507.12 178.89L514 178.13L518.73 176.4L520.06 174.19L517.63 172.06L512.09 170.61ZM504.92 160.43L498.05 161.18L493.31 162.9L491.97 165.11L494.39 167.23L499.93 168.69L507.1 169.09L513.98 168.33L518.72 166.61L520.05 164.4L517.62 162.28L512.08 160.83ZM506.7 151.22L500.19 150.11L495.59 151.11L494.12 153.95L496.2 157.86L501.26 161.8L507.95 164.71L514.47 165.81L519.07 164.8L520.52 161.97L518.44 158.06L513.38 154.12ZM511.81 143.9L506.33 141.32L502.13 141.75L500.32 145.08L501.4 150.41L505.09 156.33L510.38 161.23L515.87 163.81L520.08 163.37L521.87 160.04L520.78 154.7L517.1 148.8ZM519.48 139.6L515.55 136.15L511.94 136.25L509.61 139.86L509.2 146.04L510.82 153.11L514.03 159.19L517.97 162.64L521.58 162.53L523.9 158.9L524.3 152.73L522.69 145.67ZM528.54 138.97L526.44 135.4L523.53 135.44L520.59 139.1L518.42 145.4L517.6 152.65L518.34 158.89L520.45 162.47L523.36 162.41L526.29 158.74L528.45 152.45L529.28 145.22ZM537.85 140.26L535.75 136.68L532.85 136.73L529.92 140.39L527.75 146.69L526.92 153.94L527.66 160.19L529.76 163.76L532.67 163.7L535.6 160.04L537.76 153.74L538.59 146.51ZM547.17 141.56L545.07 137.98L542.17 138.02L539.24 141.69L537.08 147.99L536.25 155.24L536.98 161.49L539.09 165.06L541.99 165L544.91 161.33L547.08 155.04L547.9 147.8ZM556.49 142.85L554.4 139.27L551.5 139.31L548.58 142.98L546.41 149.29L545.58 156.54L546.32 162.79L548.42 166.36L551.31 166.3L554.23 162.63L556.4 156.33L557.22 149.09ZM565.82 144.14L563.73 140.56L560.84 140.6L557.92 144.27L555.75 150.58L554.92 157.84L555.66 164.09L557.75 167.66L560.64 167.6L563.56 163.93L565.72 157.63L566.55 150.39ZM575.16 145.43L573.07 141.85L570.18 141.9L567.26 145.57L565.1 151.88L564.27 159.14L565 165.39L567.09 168.96L569.98 168.9L572.89 165.23L575.05 158.92L575.88 151.68ZM584.5 146.73L582.42 143.14L579.53 143.19L576.62 146.86L574.45 153.18L573.62 160.44L574.35 166.69L576.44 170.27L579.32 170.2L582.23 166.53L584.39 160.22L585.22 152.98ZM593.84 148.02L591.77 144.44L588.89 144.49L585.97 148.16L583.81 154.48L582.98 161.74L583.71 168L585.79 171.57L588.67 171.51L591.58 167.83L593.73 161.52L594.56 154.27ZM603.2 149.32L601.12 145.73L598.25 145.78L595.34 149.46L593.18 155.78L592.34 163.04L593.07 169.3L595.15 172.87L598.02 172.81L600.93 169.13L603.08 162.82L603.91 155.57ZM612.55 150.61L610.48 147.03L607.61 147.08L604.71 150.76L602.55 157.08L601.71 164.34L602.43 170.6L604.51 174.18L607.38 174.11L610.28 170.43L612.44 164.12L613.27 156.87ZM621.92 151.91L619.85 148.33L616.98 148.38L614.08 152.06L611.92 158.38L611.09 165.65L611.81 171.91L613.88 175.48L616.75 175.42L619.65 171.73L621.8 165.42L622.63 158.17ZM631.04 155.06L630.81 152.12L628.66 152.41L625.14 155.88L621.2 161.59L617.91 168.01L616.14 173.41L616.37 176.35L618.54 176.04L622.05 172.57L625.98 166.87L629.27 160.46ZM638.76 161.52L640.11 159.88L638.55 160.68L634.51 163.71L629.07 168.16L623.69 172.84L619.82 176.48L618.48 178.11L620.05 177.3L624.09 174.27L629.52 169.83L634.89 165.16ZM643.92 170.3L646.31 170.43L645.15 171.91L640.77 174.36L634.32 177.1L627.55 179.4L622.27 180.65L619.89 180.51L621.06 179.02L625.45 176.58L631.88 173.85L638.64 171.55ZM645.72 180.05L648.47 182.15L647.45 184.4L642.95 186.18L636.15 187.02L628.89 186.7L623.12 185.29L620.39 183.18L621.41 180.94L625.92 179.16L632.71 178.32L639.95 178.64ZM645.7 189.87L648.45 191.98L647.43 194.23L642.93 196.02L636.14 196.86L628.88 196.53L623.11 195.12L620.37 193.01L621.4 190.76L625.91 188.98L632.69 188.14L639.93 188.46ZM645.68 199.69L648.43 201.8L647.41 204.06L642.91 205.85L636.12 206.69L628.87 206.36L623.1 204.95L620.36 202.83L621.39 200.58L625.9 198.79L632.68 197.95L639.92 198.28ZM645.66 209.5L648.41 211.62L647.39 213.88L642.89 215.67L636.1 216.52L628.85 216.19L623.08 214.77L620.35 212.65L621.38 210.39L625.88 208.6L632.66 207.76L639.9 208.09ZM645.64 219.31L648.39 221.43L647.38 223.7L642.87 225.49L636.09 226.34L628.84 226.01L623.07 224.59L620.34 222.47L621.36 220.2L625.87 218.41L632.64 217.56L639.88 217.89ZM645.62 229.11L648.37 231.24L647.36 233.51L642.85 235.31L636.07 236.16L628.82 235.83L623.06 234.41L620.32 232.27L621.35 230.01L625.85 228.21L632.63 227.36L639.86 227.69ZM645.6 238.91L648.35 241.04L647.34 243.31L642.84 245.12L636.05 245.97L628.81 245.64L623.04 244.22L620.31 242.08L621.34 239.81L625.84 238.01L632.61 237.16L639.85 237.49ZM645.59 248.7L648.33 250.84L647.32 253.12L642.82 254.93L636.04 255.78L628.79 255.45L623.03 254.02L620.3 251.88L621.32 249.6L625.83 247.8L632.6 246.95L639.83 247.28ZM645.57 258.49L648.31 260.63L647.3 262.91L642.8 264.73L636.02 265.58L628.78 265.25L623.02 263.82L620.29 261.67L621.31 259.39L625.81 257.58L632.58 256.73L639.81 257.06ZM646.42 263.1L648.8 263.29L647.65 264.82L643.27 267.29L636.84 270.04L630.09 272.33L624.82 273.54L622.45 273.35L623.61 271.82L627.99 269.34L634.41 266.6L641.15 264.32ZM648.86 267.26L650.2 265.68L648.66 266.54L644.63 269.6L639.21 274.06L633.84 278.71L629.97 282.3L628.63 283.88L630.19 283.01L634.22 279.94L639.63 275.49L644.99 270.85ZM652.52 270.32L652.31 267.44L650.17 267.8L646.67 271.31L642.75 277.03L639.46 283.42L637.69 288.77L637.9 291.64L640.05 291.27L643.55 287.76L647.47 282.05L650.75 275.67ZM656.85 271.83L654.8 268.31L651.96 268.43L649.08 272.15L646.93 278.49L646.1 285.74L646.8 291.96L648.86 295.47L651.7 295.34L654.58 291.61L656.72 285.28L657.55 278.04ZM666.23 273.17L664.18 269.65L661.34 269.76L658.46 273.49L656.32 279.83L655.49 287.08L656.19 293.3L658.24 296.81L661.08 296.68L663.96 292.95L666.09 286.62L666.93 279.38ZM675.61 274.5L673.57 270.98L670.74 271.1L667.86 274.82L665.72 281.17L664.88 288.42L665.58 294.64L667.63 298.16L670.47 298.03L673.34 294.29L675.48 287.96L676.31 280.72ZM685 275.84L682.97 272.32L680.13 272.43L677.26 276.16L675.12 282.51L674.29 289.77L674.98 295.99L677.02 299.5L679.86 299.37L682.73 295.64L684.86 289.3L685.69 282.06ZM694.4 277.18L692.37 273.65L689.54 273.77L686.67 277.5L684.53 283.85L683.69 291.11L684.39 297.33L686.43 300.85L689.26 300.72L692.12 296.98L694.25 290.64L695.09 283.39ZM703.8 278.52L701.77 274.99L698.95 275.11L696.08 278.84L693.94 285.19L693.11 292.46L693.8 298.68L695.83 302.2L698.66 302.06L701.52 298.32L703.65 291.98L704.49 284.73ZM713.21 279.86L711.18 276.33L708.36 276.45L705.5 280.18L703.36 286.54L702.53 293.8L703.22 300.03L705.25 303.54L708.07 303.41L710.93 299.67L713.06 293.33L713.89 286.08ZM438.34 240.73L447.58 242.04L456.83 243.36L466.08 244.68L475.34 245.99L484.61 247.31L493.88 248.63L498.16 248.35L501.78 246.34L504.2 242.89L505.05 238.54L505.03 228.79L505.02 219.04L505 209.28L504.98 199.52L504.97 189.76L504.95 179.98L504.93 170.21L504.92 160.43L506.7 151.22L511.81 143.9L519.48 139.6L528.54 138.97L537.85 140.26L547.17 141.56L556.49 142.85L565.82 144.14L575.16 145.43L584.5 146.73L593.84 148.02L603.2 149.32L612.55 150.61L621.92 151.91L631.04 155.06L638.76 161.52L643.92 170.3L645.72 180.05L645.7 189.87L645.68 199.69L645.66 209.5L645.64 219.31L645.62 229.11L645.6 238.91L645.59 248.7L645.57 258.49L646.42 263.1L648.86 267.26L652.52 270.32L656.85 271.83L666.23 273.17L675.61 274.5L685 275.84L694.4 277.18L703.8 278.52L713.21 279.86M436.2 237.22L445.45 238.53L454.7 239.85L463.96 241.16L473.22 242.48L482.49 243.8L491.77 245.12L494.23 244.96L496.32 243.8L497.71 241.81L498.19 239.31L498.18 229.56L498.16 219.81L498.14 210.05L498.12 200.29L498.1 190.52L498.09 180.75L498.07 170.97L498.05 161.18L500.19 150.11L506.33 141.32L515.55 136.15L526.44 135.4L535.75 136.68L545.07 137.98L554.4 139.27L563.73 140.56L573.07 141.85L582.42 143.14L591.77 144.44L601.12 145.73L610.48 147.03L619.85 148.33L630.81 152.12L640.11 159.88L646.31 170.43L648.47 182.15L648.45 191.98L648.43 201.8L648.41 211.62L648.39 221.43L648.37 231.24L648.35 241.04L648.33 250.84L648.31 260.63L648.8 263.29L650.2 265.68L652.31 267.44L654.8 268.31L664.18 269.65L673.57 270.98L682.97 272.32L692.37 273.65L701.77 274.99L711.18 276.33M433.27 237.31L442.52 238.63L451.77 239.95L461.03 241.26L470.3 242.58L479.57 243.9L488.85 245.22L490.62 245.1L492.12 244.27L493.11 242.85L493.46 241.05L493.44 231.3L493.42 221.54L493.4 211.78L493.39 202.01L493.37 192.24L493.35 182.47L493.33 172.68L493.31 162.9L495.59 151.11L502.13 141.75L511.94 136.25L523.53 135.44L532.85 136.73L542.17 138.02L551.5 139.31L560.84 140.6L570.18 141.9L579.53 143.19L588.89 144.49L598.25 145.78L607.61 147.08L616.98 148.38L628.66 152.41L638.55 160.68L645.15 171.91L647.45 184.4L647.43 194.23L647.41 204.06L647.39 213.88L647.38 223.7L647.36 233.51L647.34 243.31L647.32 253.12L647.3 262.91L647.65 264.82L648.66 266.54L650.17 267.8L651.96 268.43L661.34 269.76L670.74 271.1L680.13 272.43L689.54 273.77L698.95 275.11L708.36 276.45M430.31 241L439.56 242.31L448.82 243.63L458.09 244.95L467.36 246.27L476.63 247.59L485.91 248.91L488.29 248.76L490.31 247.64L491.65 245.72L492.12 243.3L492.1 233.55L492.08 223.78L492.06 214.02L492.05 204.25L492.03 194.47L492.01 184.69L491.99 174.9L491.97 165.11L494.12 153.95L500.32 145.08L509.61 139.86L520.59 139.1L529.92 140.39L539.24 141.69L548.58 142.98L557.92 144.27L567.26 145.57L576.62 146.86L585.97 148.16L595.34 149.46L604.71 150.76L614.08 152.06L625.14 155.88L634.51 163.71L640.77 174.36L642.95 186.18L642.93 196.02L642.91 205.85L642.89 215.67L642.87 225.49L642.85 235.31L642.84 245.12L642.82 254.93L642.8 264.73L643.27 267.29L644.63 269.6L646.67 271.31L649.08 272.15L658.46 273.49L667.86 274.82L677.26 276.16L686.67 277.5L696.08 278.84L705.5 280.18M428.13 247.28L437.39 248.6L446.65 249.92L455.91 251.24L465.18 252.57L474.46 253.89L483.74 255.21L487.88 254.94L491.39 253L493.72 249.66L494.54 245.46L494.52 235.7L494.5 225.93L494.48 216.16L494.46 206.38L494.45 196.6L494.43 186.82L494.41 177.03L494.39 167.23L496.2 157.86L501.4 150.41L509.2 146.04L518.42 145.4L527.75 146.69L537.08 147.99L546.41 149.29L555.75 150.58L565.1 151.88L574.45 153.18L583.81 154.48L593.18 155.78L602.55 157.08L611.92 158.38L621.2 161.59L629.07 168.16L634.32 177.1L636.15 187.02L636.14 196.86L636.12 206.69L636.1 216.52L636.09 226.34L636.07 236.16L636.05 245.97L636.04 255.78L636.02 265.58L636.84 270.04L639.21 274.06L642.75 277.03L646.93 278.49L656.32 279.83L665.72 281.17L675.12 282.51L684.53 283.85L693.94 285.19L703.36 286.54M427.31 254.48L436.57 255.8L445.83 257.13L455.09 258.45L464.36 259.77L473.64 261.1L482.92 262.43L489.49 262L495.06 258.91L498.77 253.62L500.07 246.94L500.05 237.17L500.03 227.4L500.02 217.63L500 207.85L499.98 198.07L499.96 188.28L499.95 178.49L499.93 168.69L501.26 161.8L505.09 156.33L510.82 153.11L517.6 152.65L526.92 153.94L536.25 155.24L545.58 156.54L554.92 157.84L564.27 159.14L573.62 160.44L582.98 161.74L592.34 163.04L601.71 164.34L611.09 165.65L617.91 168.01L623.69 172.84L627.55 179.4L628.89 186.7L628.88 196.53L628.87 206.36L628.85 216.19L628.84 226.01L628.82 235.83L628.81 245.64L628.79 255.45L628.78 265.25L630.09 272.33L633.84 278.71L639.46 283.42L646.1 285.74L655.49 287.08L664.88 288.42L674.29 289.77L683.69 291.11L693.11 292.46L702.53 293.8M428.08 260.66L437.33 261.98L446.58 263.31L455.85 264.63L465.12 265.96L474.39 267.29L483.67 268.62L492.69 268.03L500.34 263.79L505.45 256.52L507.23 247.35L507.21 237.58L507.2 227.81L507.18 218.04L507.17 208.26L507.15 198.47L507.13 188.68L507.12 178.89L507.1 169.09L507.95 164.71L510.38 161.23L514.03 159.19L518.34 158.89L527.66 160.19L536.98 161.49L546.32 162.79L555.66 164.09L565 165.39L574.35 166.69L583.71 168L593.07 169.3L602.43 170.6L611.81 171.91L616.14 173.41L619.82 176.48L622.27 180.65L623.12 185.29L623.11 195.12L623.1 204.95L623.08 214.77L623.07 224.59L623.06 234.41L623.04 244.22L623.03 254.02L623.02 263.82L624.82 273.54L629.97 282.3L637.69 288.77L646.8 291.96L656.19 293.3L665.58 294.64L674.98 295.99L684.39 297.33L693.8 298.68L703.22 300.03M430.22 264.16L439.46 265.49L448.72 266.81L457.98 268.14L467.24 269.46L476.51 270.79L485.79 272.12L496.63 271.42L505.81 266.33L511.95 257.6L514.1 246.57L514.08 236.81L514.07 227.04L514.05 217.27L514.04 207.49L514.03 197.71L514.01 187.92L514 178.13L513.98 168.33L514.47 165.81L515.87 163.81L517.97 162.64L520.45 162.47L529.76 163.76L539.09 165.06L548.42 166.36L557.75 167.66L567.09 168.96L576.44 170.27L585.79 171.57L595.15 172.87L604.51 174.18L613.88 175.48L616.37 176.35L618.48 178.11L619.89 180.51L620.39 183.18L620.37 193.01L620.36 202.83L620.35 212.65L620.34 222.47L620.32 232.27L620.31 242.08L620.3 251.88L620.29 261.67L622.45 273.35L628.63 283.88L637.9 291.64L648.86 295.47L658.24 296.81L667.63 298.16L677.02 299.5L686.43 300.85L695.83 302.2L705.25 303.54M433.15 264.05L442.4 265.38L451.65 266.7L460.9 268.02L470.16 269.35L479.43 270.68L488.7 272L500.23 271.26L510.01 265.84L516.54 256.56L518.82 244.83L518.81 235.07L518.8 225.3L518.79 215.53L518.77 205.76L518.76 195.98L518.75 186.19L518.73 176.4L518.72 166.61L519.07 164.8L520.08 163.37L521.58 162.53L523.36 162.41L532.67 163.7L541.99 165L551.31 166.3L560.64 167.6L569.98 168.9L579.32 170.2L588.67 171.51L598.02 172.81L607.38 174.11L616.75 175.42L618.54 176.04L620.05 177.3L621.06 179.02L621.41 180.94L621.4 190.76L621.39 200.58L621.38 210.39L621.36 220.2L621.35 230.01L621.34 239.81L621.32 249.6L621.31 259.39L623.61 271.82L630.19 283.01L640.05 291.27L651.7 295.34L661.08 296.68L670.47 298.03L679.86 299.37L689.26 300.72L698.66 302.06L708.07 303.41M436.11 260.36L445.35 261.68L454.59 263.01L463.84 264.33L473.1 265.65L482.37 266.98L491.64 268.3L502.55 267.6L511.81 262.47L517.99 253.68L520.15 242.57L520.14 232.82L520.13 223.06L520.11 213.29L520.1 203.52L520.09 193.75L520.08 183.97L520.06 174.19L520.05 164.4L520.52 161.97L521.87 160.04L523.9 158.9L526.29 158.74L535.6 160.04L544.91 161.33L554.23 162.63L563.56 163.93L572.89 165.23L582.23 166.53L591.58 167.83L600.93 169.13L610.28 170.43L619.65 171.73L622.05 172.57L624.09 174.27L625.45 176.58L625.92 179.16L625.91 188.98L625.9 198.79L625.88 208.6L625.87 218.41L625.85 228.21L625.84 238.01L625.83 247.8L625.81 257.58L627.99 269.34L634.22 279.94L643.55 287.76L654.58 291.61L663.96 292.95L673.34 294.29L682.73 295.64L692.12 296.98L701.52 298.32L710.93 299.67M438.28 254.09L447.52 255.4L456.76 256.73L466.01 258.05L475.27 259.37L484.53 260.69L493.8 262.01L502.96 261.42L510.72 257.11L515.91 249.74L517.72 240.42L517.71 230.67L517.7 220.92L517.68 211.16L517.67 201.39L517.66 191.62L517.64 181.84L517.63 172.06L517.62 162.28L518.44 158.06L520.78 154.7L524.3 152.73L528.45 152.45L537.76 153.74L547.08 155.04L556.4 156.33L565.72 157.63L575.05 158.92L584.39 160.22L593.73 161.52L603.08 162.82L612.44 164.12L621.8 165.42L625.98 166.87L629.52 169.83L631.88 173.85L632.71 178.32L632.69 188.14L632.68 197.95L632.66 207.76L632.64 217.56L632.63 227.36L632.61 237.16L632.6 246.95L632.58 256.73L634.41 266.6L639.63 275.49L647.47 282.05L656.72 285.28L666.09 286.62L675.48 287.96L684.86 289.3L694.25 290.64L703.65 291.98L713.06 293.33M439.1 246.9L448.34 248.22L457.58 249.53L466.83 250.85L476.09 252.17L485.35 253.49L494.62 254.82L501.35 254.38L507.06 251.21L510.86 245.79L512.19 238.95L512.18 229.2L512.17 219.45L512.15 209.69L512.14 199.93L512.12 190.16L512.11 180.39L512.09 170.61L512.08 160.83L513.38 154.12L517.1 148.8L522.69 145.67L529.28 145.22L538.59 146.51L547.9 147.8L557.22 149.09L566.55 150.39L575.88 151.68L585.22 152.98L594.56 154.27L603.91 155.57L613.27 156.87L622.63 158.17L629.27 160.46L634.89 165.16L638.64 171.55L639.95 178.64L639.93 188.46L639.92 198.28L639.9 208.09L639.88 217.89L639.86 227.69L639.85 237.49L639.83 247.28L639.81 257.06L641.15 264.32L644.99 270.85L650.75 275.67L657.55 278.04L666.93 279.38L676.31 280.72L685.69 282.06L695.09 283.39L704.49 284.73L713.89 286.08" stroke="#8c8c8c" stroke-width=".3" fill="none" opacity=".5"/>
<path d="M493.88 248.63L491.77 245.12L488.85 245.22L485.91 248.91L483.74 255.21L482.92 262.43L483.67 268.62L485.79 272.12L488.7 272L491.64 268.3L493.8 262.01L494.62 254.82ZM505.05 238.54L498.19 239.31L493.46 241.05L492.12 243.3L494.54 245.46L500.07 246.94L507.23 247.35L514.1 246.57L518.82 244.83L520.15 242.57L517.72 240.42L512.19 238.95ZM504.92 160.43L498.05 161.18L493.31 162.9L491.97 165.11L494.39 167.23L499.93 168.69L507.1 169.09L513.98 168.33L518.72 166.61L520.05 164.4L517.62 162.28L512.08 160.83ZM528.54 138.97L526.44 135.4L523.53 135.44L520.59 139.1L518.42 145.4L517.6 152.65L518.34 158.89L520.45 162.47L523.36 162.41L526.29 158.74L528.45 152.45L529.28 145.22ZM575.16 145.43L573.07 141.85L570.18 141.9L567.26 145.57L565.1 151.88L564.27 159.14L565 165.39L567.09 168.96L569.98 168.9L572.89 165.23L575.05 158.92L575.88 151.68ZM621.92 151.91L619.85 148.33L616.98 148.38L614.08 152.06L611.92 158.38L611.09 165.65L611.81 171.91L613.88 175.48L616.75 175.42L619.65 171.73L621.8 165.42L622.63 158.17ZM645.72 180.05L648.47 182.15L647.45 184.4L642.95 186.18L636.15 187.02L628.89 186.7L623.12 185.29L620.39 183.18L621.41 180.94L625.92 179.16L632.71 178.32L639.95 178.64ZM645.57 258.49L648.31 260.63L647.3 262.91L642.8 264.73L636.02 265.58L628.78 265.25L623.02 263.82L620.29 261.67L621.31 259.39L625.81 257.58L632.58 256.73L639.81 257.06ZM656.85 271.83L654.8 268.31L651.96 268.43L649.08 272.15L646.93 278.49L646.1 285.74L646.8 291.96L648.86 295.47L651.7 295.34L654.58 291.61L656.72 285.28L657.55 278.04ZM438.34 240.73L436.2 237.22L433.27 237.31L430.31 241L428.13 247.28L427.31 254.48L428.08 260.66L430.22 264.16L433.15 264.05L436.11 260.36L438.28 254.09L439.1 246.9ZM713.21 279.86L711.18 276.33L708.36 276.45L705.5 280.18L703.36 286.54L702.53 293.8L703.22 300.03L705.25 303.54L708.07 303.41L710.93 299.67L713.06 293.33L713.89 286.08Z" stroke="#4a4a4a" stroke-width=".4" stroke-dasharray=".9 1.1" fill="none" opacity=".7"/>
<path d="M433.21 250.69L442.46 252.01L451.71 253.33L460.97 254.65L470.23 255.97L479.5 257.29L488.78 258.62L495.43 258.19L501.06 255.06L504.82 249.7L506.14 242.94L506.12 233.18L506.11 223.42L506.09 213.66L506.07 203.89L506.06 194.11L506.04 184.33L506.03 174.54L506.01 164.75L507.33 157.96L511.1 152.56L516.76 149.39L523.44 148.93L532.76 150.22L542.08 151.52L551.41 152.81L560.74 154.11L570.08 155.4L579.43 156.7L588.78 158L598.13 159.3L607.5 160.6L616.87 161.9L623.59 164.23L629.3 169L633.1 175.47L634.43 182.67L634.41 192.49L634.4 202.32L634.38 212.14L634.36 221.95L634.35 231.76L634.33 241.56L634.31 251.36L634.3 261.15L635.62 268.32L639.42 274.78L645.11 279.54L651.83 281.89L661.21 283.23L670.6 284.57L680 285.91L689.4 287.25L698.8 288.59L708.22 289.93" stroke="#909090" stroke-width=".75" fill="none"/>
<path d="M430.21 246.19L439.46 247.51L448.71 248.83L457.97 250.15L467.23 251.47L476.5 252.79L485.78 254.12M503.01 160.25L504.33 153.46L508.1 148.06L513.76 144.89L520.44 144.43L529.76 145.72L539.08 147.02L548.41 148.31L557.74 149.61L567.08 150.9L576.43 152.2L585.78 153.5L595.13 154.8L604.5 156.1L613.87 157.4M648.83 277.39L658.21 278.73L667.6 280.07L677 281.41L686.4 282.75L695.8 284.09L705.22 285.43" stroke="#6a6a6a" stroke-width=".5" stroke-dasharray="2.6 1.6" fill="none"/>
<path d="M646.43 184.67V257.15" stroke="#6a6a6a" stroke-width=".45" stroke-dasharray="2 1 .6 1" fill="none"/>
<path d="M512.55 182.88L553.44 155.05M507.78 178.86L596.36 191.26M521.41 184.12L562.25 156.28M511.87 176.08L600.41 188.46M530.27 185.36L571.07 157.5M515.97 173.3L604.45 185.66M539.14 186.61L579.88 158.73M520.06 170.52L608.5 182.86M548 187.85L588.7 159.95M524.15 167.73L612.55 180.07M556.86 189.09L597.52 161.18M528.25 164.95L616.59 177.27M565.73 190.33L606.33 162.4M532.34 162.17L620.64 174.47M574.59 191.57L615.15 163.63M536.43 159.39L624.69 171.67M583.45 192.81L623.96 164.85M540.53 156.61L628.73 168.87" stroke="#b8b8b8" stroke-width=".3" fill="none" opacity=".8"/>
<polyline points="503.68,181.64 544.62,153.83 632.78,166.08 592.31,194.05" fill="none" stroke="#5a5a5a" stroke-width=".55"/>
<polyline points="503.68,181.64 592.31,194.05" fill="none" stroke="#8a8a8a" stroke-width=".5" stroke-dasharray="1.2 .8"/>
<path d="M564.2 156.5V178.4L573.2 172" stroke="#666" stroke-width=".4" fill="none"/>
<path d="M514.35 181L548.05 272M548.05 156L514.35 295.4" stroke="#8484d6" stroke-width="0.4" fill="none"/><path d="M587.5 193.5L621 283.5M621 168L587.5 306.6" stroke="#8484d6" stroke-width="0.4" fill="none"/>
<path d="M514.15 181V296.4" stroke="#585858" stroke-width=".8"/>
<path d="M547.85 156V273" stroke="#585858" stroke-width=".8"/>
<path d="M587.3 193.5V307.6" stroke="#585858" stroke-width=".8"/>
<path d="M620.8 168V284.5" stroke="#585858" stroke-width=".8"/>
<polygon points="535.1,288.7 543.1,282.1 553,282.1 560.9,285.8 553,291.4" fill="#38e238"/><polygon points="542.5,282.6 543.1,282.1 553,282.1 560.9,285.8 558.5,287.4 551,285" fill="#72f572"/><circle cx="548" cy="277.4" r="4.8" fill="#3cf03c"/>
<polygon points="608.4,299.1 616.4,292.5 626.3,292.5 634.2,296.2 626.3,301.8" fill="#38e238"/><polygon points="615.8,293 616.4,292.5 626.3,292.5 634.2,296.2 631.8,297.8 624.3,295.4" fill="#72f572"/><circle cx="621.3" cy="287.8" r="4.8" fill="#3cf03c"/>
<polygon points="501.3,311.3 509.3,304.7 519.2,304.7 527.1,308.4 519.2,314" fill="#38e238"/><polygon points="508.7,305.2 509.3,304.7 519.2,304.7 527.1,308.4 524.7,310 517.2,307.6" fill="#72f572"/><circle cx="514.2" cy="300" r="4.8" fill="#3cf03c"/>
<polygon points="574.8,322.3 582.8,315.7 592.7,315.7 600.6,319.4 592.7,325" fill="#38e238"/><polygon points="582.2,316.2 582.8,315.7 592.7,315.7 600.6,319.4 598.2,321 590.7,318.6" fill="#72f572"/><circle cx="587.7" cy="311" r="4.8" fill="#3cf03c"/>
<g opacity="0.85"><polygon points="418.6,252.07 436.64,254.65 436.66,259.18 418.61,256.6" fill="#38e038"/><polygon points="436.64,254.65 444.57,249.22 444.59,253.75 436.66,259.18" fill="#5af25a"/><polygon points="418.6,252.07 436.64,254.65 444.57,249.22 426.55,246.65" fill="#40ee40"/></g>
<g opacity="0.85"><polygon points="694.64,291.5 713.02,294.12 713.01,298.69 694.63,296.06" fill="#38e038"/><polygon points="713.02,294.12 720.67,288.6 720.66,293.16 713.01,298.69" fill="#5af25a"/><polygon points="694.64,291.5 713.02,294.12 720.67,288.6 702.31,285.98" fill="#40ee40"/></g>
<path d="M510.3 238.6l1.6 -1.2 2.6 1.3 2.4 0 1.8 -1.3" stroke="#4848e8" stroke-width=".5" fill="none"/>
<path d="M543.8 215.4l1.6 -1.2 2.6 1.3 2.4 0 1.8 -1.3" stroke="#4848e8" stroke-width=".5" fill="none"/>
<path d="M584.2 250.2l1.6 -1.2 2.6 1.3 2.4 0 1.8 -1.3" stroke="#4848e8" stroke-width=".5" fill="none"/>
<path d="M617.3 226l1.6 -1.2 2.6 1.3 2.4 0 1.8 -1.3" stroke="#4848e8" stroke-width=".5" fill="none"/>
<path d="M513.6 296L524.5 297" stroke="#e02020" stroke-width=".8"/><path d="M513.6 296V281" stroke="#2020d0" stroke-width=".8"/><path d="M513.6 296L518 292.4" stroke="#20b020" stroke-width=".8"/><circle cx="513.7" cy="286" r=".9" fill="#1414b4"/><circle cx="522.9" cy="296.9" r=".85" fill="#b81414"/>
<circle cx="491.77" cy="245.12" r=".5" fill="#a0a030"/><circle cx="483.74" cy="255.21" r=".5" fill="#b03030"/><circle cx="485.79" cy="272.12" r=".5" fill="#a0a030"/><circle cx="493.8" cy="262.01" r=".5" fill="#b03030"/><circle cx="498.19" cy="239.31" r=".5" fill="#a0a030"/><circle cx="494.54" cy="245.46" r=".5" fill="#b03030"/><circle cx="514.1" cy="246.57" r=".5" fill="#a0a030"/><circle cx="517.72" cy="240.42" r=".5" fill="#b03030"/><circle cx="498.05" cy="161.18" r=".5" fill="#a0a030"/><circle cx="494.39" cy="167.23" r=".5" fill="#b03030"/><circle cx="513.98" cy="168.33" r=".5" fill="#a0a030"/><circle cx="517.62" cy="162.28" r=".5" fill="#b03030"/><circle cx="526.44" cy="135.4" r=".5" fill="#a0a030"/><circle cx="518.42" cy="145.4" r=".5" fill="#b03030"/><circle cx="520.45" cy="162.47" r=".5" fill="#a0a030"/><circle cx="528.45" cy="152.45" r=".5" fill="#b03030"/><circle cx="573.07" cy="141.85" r=".5" fill="#a0a030"/><circle cx="565.1" cy="151.88" r=".5" fill="#b03030"/><circle cx="567.09" cy="168.96" r=".5" fill="#a0a030"/><circle cx="575.05" cy="158.92" r=".5" fill="#b03030"/><circle cx="619.85" cy="148.33" r=".5" fill="#a0a030"/><circle cx="611.92" cy="158.38" r=".5" fill="#b03030"/><circle cx="613.88" cy="175.48" r=".5" fill="#a0a030"/><circle cx="621.8" cy="165.42" r=".5" fill="#b03030"/><circle cx="648.47" cy="182.15" r=".5" fill="#a0a030"/><circle cx="636.15" cy="187.02" r=".5" fill="#b03030"/><circle cx="620.39" cy="183.18" r=".5" fill="#a0a030"/><circle cx="632.71" cy="178.32" r=".5" fill="#b03030"/><circle cx="648.31" cy="260.63" r=".5" fill="#a0a030"/><circle cx="636.02" cy="265.58" r=".5" fill="#b03030"/><circle cx="620.29" cy="261.67" r=".5" fill="#a0a030"/><circle cx="632.58" cy="256.73" r=".5" fill="#b03030"/><circle cx="654.8" cy="268.31" r=".5" fill="#a0a030"/><circle cx="646.93" cy="278.49" r=".5" fill="#b03030"/><circle cx="648.86" cy="295.47" r=".5" fill="#a0a030"/><circle cx="656.72" cy="285.28" r=".5" fill="#b03030"/>
<circle cx="503.68" cy="181.64" r=".5" fill="#b03030"/>
<circle cx="592.31" cy="194.05" r=".5" fill="#b03030"/>
<circle cx="632.78" cy="166.08" r=".5" fill="#b03030"/>
<circle cx="544.62" cy="153.83" r=".5" fill="#b03030"/>
</g>
<g opacity=".99"><path d="M399.9 357.4V346.8" stroke="#3030e0" stroke-width=".9"/><path d="M399.9 357.4L404.2 354.2" stroke="#20c020" stroke-width=".8"/><path d="M399.9 357.4L410 358.7" stroke="#e02020" stroke-width=".8"/><text x="399.9" y="345.2" font-family="Liberation Sans,sans-serif" font-size="3" fill="#4040e0" text-anchor="middle">Z</text><text x="406.2" y="354.2" font-family="Liberation Sans,sans-serif" font-size="3" fill="#20c020" text-anchor="middle">Y</text><text x="413" y="360.4" font-family="Liberation Sans,sans-serif" font-size="3" fill="#e02020" text-anchor="middle">X</text><circle cx="399.9" cy="347.8" r=".75" fill="#1818b0"/><circle cx="409" cy="358.5" r=".7" fill="#b01010"/><circle cx="403.7" cy="354.6" r=".6" fill="#10a010"/></g>
<g opacity=".99"><text transform="translate(534.1 414.5) scale(0.742 1)" font-size="3.91" fill="#2c3038">FANG</text><text transform="translate(545.1 414.5) scale(0.782 1)" font-size="3.91" fill="#2c3038">RASTER</text><text transform="translate(559.9 414.5) scale(0.822 1)" font-size="3.91" fill="#2c3038">KARTES</text><text transform="translate(575.1 414.5) scale(0.811 1)" font-size="3.91" fill="#2c3038">OFANG</text><text transform="translate(589 414.5) scale(0.830 1)" font-size="3.91" fill="#2c3038">HLINIEN</text><text transform="translate(604 414.5) scale(0.780 1)" font-size="3.91" fill="#2c3038">DXF</text><text transform="translate(7.2 4.8) scale(0.780 1)" font-size="4.19" fill="#222">RFEM 5.21.01 x64 - Support 2</text><text transform="translate(5.3 11.9) scale(0.869 1)" font-size="4.19" fill="#3c4250">Datei</text><text transform="translate(17.8 11.9) scale(0.799 1)" font-size="4.19" fill="#3c4250">Bearbeiten</text><text transform="translate(38.8 11.9) scale(0.793 1)" font-size="4.19" fill="#3c4250">Ansicht</text><text transform="translate(54 11.9) scale(0.871 1)" font-size="4.19" fill="#3c4250">Einfügen</text><text transform="translate(72.8 11.9) scale(0.823 1)" font-size="4.19" fill="#3c4250">Berechnung</text><text transform="translate(95.8 11.9) scale(0.797 1)" font-size="4.19" fill="#3c4250">Ergebnisse</text><text transform="translate(116.8 11.9) scale(0.758 1)" font-size="4.19" fill="#3c4250">Extras</text><text transform="translate(130 11.9) scale(0.791 1)" font-size="4.19" fill="#3c4250">Tabelle</text><text transform="translate(145.5 11.9) scale(0.706 1)" font-size="4.19" fill="#3c4250">Optionen</text><text transform="translate(164 11.9) scale(0.836 1)" font-size="4.19" fill="#3c4250">Zusatzmodule</text><text transform="translate(190 11.9) scale(0.845 1)" font-size="4.19" fill="#3c4250">Fenster</text><text transform="translate(206 11.9) scale(0.835 1)" font-size="4.19" fill="#3c4250">Hilfe</text><text transform="translate(131.8 19.2) scale(0.805 1)" font-size="4.05" fill="#2a2a2a">LF5 - Wind 270 °</text><text transform="translate(10 36.9) scale(0.793 1)" font-size="4.19" fill="#98a2b4">Support 2</text><text transform="translate(389 36.9) scale(0.804 1)" font-size="4.19" fill="#161c2a">Support 2</text></g>
</svg>
</body></html>
